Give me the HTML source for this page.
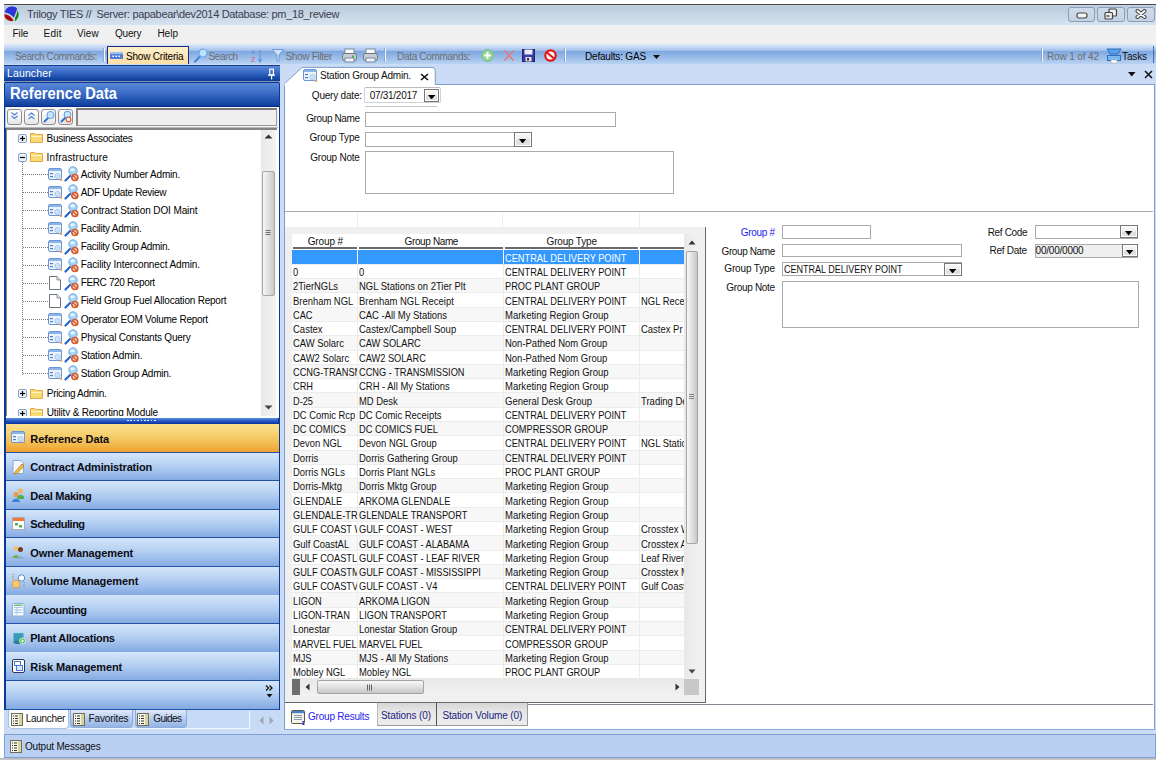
<!DOCTYPE html>
<html><head><meta charset="utf-8"><style>
html,body{margin:0;padding:0;}
body{width:1156px;height:760px;position:relative;overflow:hidden;background:#fff;font-family:"Liberation Sans",sans-serif;}
div,svg{position:absolute;box-sizing:border-box;}
</style></head><body>
<div style="left:4px;top:4px;width:1152px;height:1px;background:#474747;"></div>
<div style="left:4px;top:5px;width:1152px;height:20px;background:linear-gradient(#c6d4e4 0%,#bccbdb 10%,#d6e3f1 100%);"></div>
<svg style="left:4.3px;top:6px;" width="15" height="16" viewBox="0 0 15 16">
<path d="M0.6 6.3 Q1.8 1.2 7.5 0.6 Q11.8 0.3 13.2 2.6 L10 11.8 Q6 7.2 0.6 6.3 Z" fill="#2f34d8"/>
<path d="M0.3 8.3 Q5.5 8.2 9.6 14.6 Q8.6 15.4 6.2 15 Q0.4 13.4 0.3 8.3 Z" fill="#a80808"/>
<path d="M13.6 4.2 Q15.3 7.5 14.2 11 Q13.2 13.8 11 15.4 L10.9 12.6 Q12.8 8.8 13.6 4.2 Z" fill="#0a8a14"/>
</svg>
<div style='left:27px;top:9px;font:normal 11px "Liberation Sans";line-height:11px;color:#3a4050;white-space:pre;letter-spacing:-0.33px;'>Trilogy TIES //  Server: papabear\dev2014 Database: pm_18_review</div>
<div style="left:1068px;top:6.6px;width:27px;height:15.2px;border:1px solid #8a9cb6;border-radius:3px;background:linear-gradient(#d0dceb,#c4d2e4);"></div>
<div style="left:1097.4px;top:6.6px;width:27.2px;height:15.2px;border:1px solid #8a9cb6;border-radius:3px;background:linear-gradient(#d0dceb,#c4d2e4);"></div>
<div style="left:1127.2px;top:6.6px;width:27.5px;height:15.2px;border:1px solid #8a9cb6;border-radius:3px;background:linear-gradient(#d0dceb,#c4d2e4);"></div>
<svg style="left:1076px;top:12px;" width="12" height="7" viewBox="0 0 12 7"><rect x="1" y="1" width="10" height="5" rx="2" fill="#f4f4f4" stroke="#454545" stroke-width="1.2"/></svg>
<svg style="left:1104px;top:8px;" width="14" height="12" viewBox="0 0 14 12"><rect x="5" y="1" width="7.5" height="7" rx="1" fill="#eeeeee" stroke="#454545" stroke-width="1.2"/><rect x="1" y="4.5" width="7.5" height="6.5" rx="1" fill="#eeeeee" stroke="#454545" stroke-width="1.2"/><rect x="2.5" y="7" width="3" height="2" fill="#777"/></svg>
<svg style="left:1135px;top:9px;" width="12" height="10" viewBox="0 0 12 10"><path d="M2.5 2 L9.5 8 M9.5 2 L2.5 8" stroke="#454545" stroke-width="4" stroke-linecap="round"/><path d="M2.5 2 L9.5 8 M9.5 2 L2.5 8" stroke="#f6f6f6" stroke-width="2" stroke-linecap="round"/></svg>
<div style="left:4px;top:25px;width:1152px;height:19px;background:#f0f0f0;"></div>
<div style='left:12.5px;top:29px;font:normal 10px "Liberation Sans";line-height:10px;color:#111;white-space:pre;letter-spacing:-0.09px;'>File</div>
<div style='left:43.4px;top:29px;font:normal 10px "Liberation Sans";line-height:10px;color:#111;white-space:pre;letter-spacing:0.33px;'>Edit</div>
<div style='left:77px;top:29px;font:normal 10px "Liberation Sans";line-height:10px;color:#111;white-space:pre;letter-spacing:0.06px;'>View</div>
<div style='left:115px;top:29px;font:normal 10px "Liberation Sans";line-height:10px;color:#111;white-space:pre;letter-spacing:-0.19px;'>Query</div>
<div style='left:157.4px;top:29px;font:normal 10px "Liberation Sans";line-height:10px;color:#111;white-space:pre;letter-spacing:0.01px;'>Help</div>
<div style="left:4px;top:44px;width:1152px;height:20px;background:linear-gradient(#e0ebfb 0%,#c8daf5 15%,#a6c1ea 32%,#7ea8e0 37%,#93b7e7 60%,#b9d3f2 100%);"></div>
<div style='left:15px;top:52px;font:normal 10px "Liberation Sans";line-height:10px;color:#6e6e6e;white-space:pre;letter-spacing:-0.41px;'>Search Commands:</div>
<div style="left:103px;top:48px;width:1px;height:14px;background:#8aa6d0;"></div>
<div style="left:104px;top:48px;width:1px;height:14px;background:#f4f8fd;"></div>
<div style="left:107px;top:46px;width:82px;height:19px;border:1px solid #1f2a7a;border-bottom:none;background:linear-gradient(#fff0cc,#fcdca4);"></div>
<svg style="left:110px;top:52px;" width="13" height="7" viewBox="0 0 13 7"><rect x="0" y="0" width="13" height="7" fill="#4f7fd8"/><rect x="0" y="0" width="13" height="2" fill="#9cc0f0"/><rect x="2.5" y="3.5" width="1.5" height="1.5" fill="#fff"/><rect x="5.5" y="3.5" width="1.5" height="1.5" fill="#fff"/><rect x="8.5" y="3.5" width="1.5" height="1.5" fill="#fff"/></svg>
<div style='left:126px;top:52px;font:normal 10px "Liberation Sans";line-height:10px;color:#000;white-space:pre;letter-spacing:-0.2px;'>Show Criteria</div>
<svg style="left:193px;top:48px;" width="15" height="15" viewBox="0 0 15 15"><path d="M2 13.5 L7 8.5" stroke="#4a86d8" stroke-width="2.2" stroke-linecap="round"/><circle cx="10" cy="5" r="4" fill="#bfe0fb" stroke="#6aa6e6" stroke-width="1.2"/></svg>
<div style='left:208.5px;top:52px;font:normal 10px "Liberation Sans";line-height:10px;color:#6e6e6e;white-space:pre;letter-spacing:-0.4px;'>Search</div>
<svg style="left:251px;top:48px;" width="12" height="15" viewBox="0 0 12 15"><text x="0" y="6" font-size="6" fill="#5a8ad8" font-family="Liberation Sans">A</text><text x="0" y="14" font-size="7" fill="#e0506a" font-family="Liberation Sans">Z</text><path d="M9 2 L9 13 M7 11 L9 14 L11 11" stroke="#5a9ae0" stroke-width="1.2" fill="none"/></svg>
<svg style="left:272px;top:49px;" width="12" height="13" viewBox="0 0 12 13"><path d="M0.5 0.5 L11.5 0.5 L7 6 L7 12 L5 12 L5 6 Z" fill="#cfe2f7" stroke="#6a9ad8"/></svg>
<div style='left:285.5px;top:52px;font:normal 10px "Liberation Sans";line-height:10px;color:#6e6e6e;white-space:pre;letter-spacing:-0.32px;'>Show Filter</div>
<svg style="left:342px;top:48px;" width="15" height="15" viewBox="0 0 15 15"><rect x="3" y="1" width="9" height="5" fill="#fff" stroke="#7a8aa0"/><rect x="0.5" y="5.5" width="14" height="7" rx="2" fill="#c8ccd4" stroke="#6a7280"/><rect x="3" y="10" width="9" height="4" fill="#eef2f8" stroke="#7a8aa0"/><rect x="10" y="7.5" width="2" height="2" fill="#20c020"/></svg>
<svg style="left:363px;top:48px;" width="15" height="15" viewBox="0 0 15 15"><rect x="3" y="1" width="9" height="5" fill="#fff" stroke="#7a8aa0"/><rect x="0.5" y="5.5" width="14" height="7" rx="2" fill="#c8ccd4" stroke="#6a7280"/><rect x="3" y="10" width="9" height="4" fill="#eef2f8" stroke="#7a8aa0"/></svg>
<div style="left:384px;top:48px;width:1px;height:14px;background:#8aa6d0;"></div>
<div style="left:385px;top:48px;width:1px;height:14px;background:#f4f8fd;"></div>
<div style='left:397px;top:52px;font:normal 10px "Liberation Sans";line-height:10px;color:#6e6e6e;white-space:pre;letter-spacing:-0.31px;'>Data Commands:</div>
<svg style="left:481px;top:49px;" width="13" height="13" viewBox="0 0 13 13"><circle cx="6.5" cy="6.5" r="6" fill="#8fcf9a" stroke="#7cbc88"/><path d="M6.5 3 V10 M3 6.5 H10" stroke="#fff" stroke-width="2"/></svg>
<svg style="left:503px;top:49px;" width="12" height="13" viewBox="0 0 12 13"><path d="M1.5 1.5 L10.5 11.5 M10.5 1.5 L1.5 11.5" stroke="#e87878" stroke-width="1.6"/></svg>
<svg style="left:522px;top:49px;" width="13" height="13" viewBox="0 0 13 13"><rect x="0.5" y="0.5" width="12" height="12" fill="#3a3aa0" stroke="#22226e"/><rect x="2.5" y="0.5" width="8" height="5" fill="#e8ecf8"/><rect x="3.5" y="8" width="6" height="4.5" fill="#e0e0e8"/><rect x="5" y="9" width="2" height="2.5" fill="#333"/></svg>
<svg style="left:544px;top:49px;" width="13" height="13" viewBox="0 0 13 13"><circle cx="6.5" cy="6.5" r="5.2" fill="#fff" stroke="#e01818" stroke-width="2.2"/><path d="M3 3.5 L10 9.5" stroke="#e01818" stroke-width="2.2"/></svg>
<div style="left:564px;top:48px;width:1px;height:14px;background:#8aa6d0;"></div>
<div style="left:565px;top:48px;width:1px;height:14px;background:#f4f8fd;"></div>
<div style='left:585px;top:52px;font:normal 10px "Liberation Sans";line-height:10px;color:#000;white-space:pre;letter-spacing:-0.19px;'>Defaults: GAS</div>
<svg style="left:653px;top:55px;" width="7" height="4" viewBox="0 0 7 4"><path d="M0 0 H7 L3.5 4 Z" fill="#111"/></svg>
<div style="left:1041px;top:48px;width:1px;height:14px;background:#8aa6d0;"></div>
<div style="left:1042px;top:48px;width:1px;height:14px;background:#f4f8fd;"></div>
<div style='left:1047px;top:52px;font:normal 10px "Liberation Sans";line-height:10px;color:#6e6e6e;white-space:pre;letter-spacing:-0.13px;'>Row 1 of 42</div>
<svg style="left:1106px;top:48px;" width="16" height="16" viewBox="0 0 16 16"><path d="M1 1 H15 L12 6 H4 Z" fill="#5aa0e8" stroke="#2f6fc0"/><rect x="1.5" y="7.5" width="13" height="5" fill="#7ab8f0" stroke="#2f6fc0"/><rect x="5" y="12" width="6" height="3" fill="#fff" stroke="#aaa" stroke-width="0.6"/></svg>
<div style='left:1122px;top:52px;font:normal 10px "Liberation Sans";line-height:10px;color:#111;white-space:pre;letter-spacing:-0.12px;'>Tasks</div>
<div style="left:1152.5px;top:46px;width:1.2px;height:17px;background:#4a6aa8;"></div>
<div style="left:4px;top:64px;width:1152px;height:670px;background:#cadcf6;"></div>
<div style="left:4px;top:65px;width:275.5px;height:645px;background:#0b3a96;"></div>
<div style="left:4px;top:65px;width:275.5px;height:16.5px;background:linear-gradient(#5d8ad8 0%,#3a6cc6 40%,#1f52b0 70%,#0b3894 100%);border-top:1px solid #123a8e;border-bottom:1px solid #07308a;"></div>
<div style='left:7px;top:68px;font:normal 10.5px "Liberation Sans";line-height:10.5px;color:#fff;white-space:pre;letter-spacing:0.12px;'>Launcher</div>
<svg style="left:267px;top:68px;" width="9" height="12" viewBox="0 0 9 12"><rect x="2.8" y="1.2" width="3.6" height="5.6" fill="none" stroke="#fff" stroke-width="1.2"/><path d="M1 7.2 H8 M4.6 7.2 V11.5" stroke="#fff" stroke-width="1.2"/></svg>
<div style="left:4px;top:81px;width:276px;height:1.5px;background:#8898b0;"></div>
<div style="left:5px;top:82px;width:274px;height:24.5px;background:linear-gradient(#5b8ad8 0%,#3e6fc8 40%,#2558b4 70%,#0f3e9c 100%);border-top:1px solid #0c3590;border-bottom:1.5px solid #062c86;"></div>
<div style='left:9.8px;top:86px;font:bold 15.8px "Liberation Sans";line-height:15.8px;color:#fff;white-space:pre;transform:scaleX(0.9302);transform-origin:0 0;'>Reference Data</div>
<div style="left:6px;top:106.5px;width:272.5px;height:311px;background:#fbfbfb;"></div>
<div style="left:4.5px;top:106.5px;width:273.5px;height:21.5px;background:#f4f4f4;border-bottom:1px solid #b8b8b8;border-left:1px solid #b0c4e6;"></div>
<div style="left:7px;top:108.8px;width:15px;height:16px;border:1px solid #8e8e8e;border-radius:3px;background:linear-gradient(#ffffff,#e6e6e6);"></div>
<div style="left:24px;top:108.8px;width:15px;height:16px;border:1px solid #8e8e8e;border-radius:3px;background:linear-gradient(#ffffff,#e6e6e6);"></div>
<div style="left:41px;top:108.8px;width:15px;height:16px;border:1px solid #8e8e8e;border-radius:3px;background:linear-gradient(#ffffff,#e6e6e6);"></div>
<div style="left:58px;top:108.8px;width:15px;height:16px;border:1px solid #8e8e8e;border-radius:3px;background:linear-gradient(#ffffff,#e6e6e6);"></div>
<svg style="left:10px;top:111px;" width="9" height="10" viewBox="0 0 9 10"><path d="M1.5 1.5 L4.5 4 L7.5 1.5 M1.5 5 L4.5 7.5 L7.5 5" stroke="#4f80d4" stroke-width="1.1" fill="none"/></svg>
<svg style="left:27px;top:111px;" width="9" height="10" viewBox="0 0 9 10"><path d="M1.5 4.5 L4.5 2 L7.5 4.5 M1.5 8 L4.5 5.5 L7.5 8" stroke="#4f80d4" stroke-width="1.1" fill="none"/></svg>
<svg style="left:43px;top:110px;" width="12" height="13" viewBox="0 0 12 13"><path d="M1.5 11.5 L5 8" stroke="#2a72d8" stroke-width="2" stroke-linecap="round"/><circle cx="7.5" cy="5" r="3.6" fill="#c6e4fb" stroke="#5a9ae0" stroke-width="1"/></svg>
<svg style="left:60px;top:110px;" width="12" height="13" viewBox="0 0 12 13"><path d="M1.5 11.5 L5 8" stroke="#2a72d8" stroke-width="2" stroke-linecap="round"/><circle cx="7.5" cy="4.5" r="3.4" fill="#c6e4fb" stroke="#5a9ae0" stroke-width="1"/><circle cx="8.5" cy="9.5" r="2.3" fill="#fff" stroke="#e0602a" stroke-width="1.2"/></svg>
<div style="left:76px;top:108px;width:200.5px;height:18px;border:1px solid #9a9a9a;border-top:2px solid #7a7a7a;border-left:2px solid #8a8a8a;background:#efefef;"></div>
<div style="left:6px;top:128px;width:270.5px;height:287.5px;background:#fff;border-top:2px solid #858585;border-left:1.5px solid #8a8a8a;"></div>
<div style="left:261px;top:130px;width:14.5px;height:285.5px;background:linear-gradient(90deg,#e9e9e9,#f3f3f3);"></div>
<svg style="left:263.5px;top:134px;" width="9" height="5" viewBox="0 0 9 5"><path d="M0.5 4.5 L4.5 0.5 L8.5 4.5 Z" fill="#333"/></svg>
<svg style="left:263.5px;top:405px;" width="9" height="5" viewBox="0 0 9 5"><path d="M0.5 0.5 L4.5 4.5 L8.5 0.5 Z" fill="#444"/></svg>
<div style="left:262px;top:171px;width:12.5px;height:124.5px;border:1px solid #a8a8a8;border-radius:2px;background:linear-gradient(90deg,#f6f6f6,#dcdcdc 60%,#c9c9c9);"></div>
<svg style="left:264px;top:230px;" width="8" height="6" viewBox="0 0 8 6"><path d="M1.5 0.5 H6.5 M1.5 2.5 H6.5 M1.5 4.5 H6.5" stroke="#707070" stroke-width="1"/></svg>
<svg style="left:18.3px;top:134px;" width="9" height="9" viewBox="0 0 9 9"><rect x="0.5" y="0.5" width="8" height="8" rx="1.5" fill="#eef2f7" stroke="#86a3c8"/><path d="M2 4.5 H7" stroke="#000" stroke-width="1.2"/><path d="M4.5 2 V7" stroke="#000" stroke-width="1.2"/></svg>
<svg style="left:30px;top:132px;" width="13" height="11" viewBox="0 0 13 11"><path d="M0.5 1.5 H5 L6 2.5 H12.5 V10.5 H0.5 Z" fill="#f7dc73" stroke="#e4a450"/><path d="M1 4.5 H12" stroke="#fff4c0" stroke-width="1"/></svg>
<div style='left:46.6px;top:134px;font:normal 10px "Liberation Sans";line-height:10px;color:#000;white-space:pre;letter-spacing:-0.28px;'>Business Associates</div>
<svg style="left:18.3px;top:153px;" width="9" height="9" viewBox="0 0 9 9"><rect x="0.5" y="0.5" width="8" height="8" rx="1.5" fill="#eef2f7" stroke="#86a3c8"/><path d="M2 4.5 H7" stroke="#000" stroke-width="1.2"/></svg>
<svg style="left:30px;top:151px;" width="13" height="11" viewBox="0 0 13 11"><path d="M0.5 1.5 H5 L6 2.5 H12.5 V10.5 H0.5 Z" fill="#f7dc73" stroke="#e4a450"/><path d="M1 4.5 H12" stroke="#fff4c0" stroke-width="1"/></svg>
<div style='left:46.6px;top:153px;font:normal 10px "Liberation Sans";line-height:10px;color:#000;white-space:pre;letter-spacing:0.17px;'>Infrastructure</div>
<div style="left:22px;top:162px;width:1px;height:212.5px;background:repeating-linear-gradient(#7a7a7a 0 1px,transparent 1px 2px);"></div>
<div style="left:23px;top:174px;width:25px;height:1px;background:repeating-linear-gradient(90deg,#7a7a7a 0 1px,transparent 1px 2px);"></div>
<svg style="left:47.8px;top:167.7px;" width="15" height="13" viewBox="0 0 15 13"><rect x="0.5" y="0.5" width="13" height="11" rx="1.5" fill="#eef3f9" stroke="#6a96d8"/><rect x="1" y="1" width="12" height="2" fill="#8ab4ea"/><rect x="2" y="5" width="3" height="1.2" fill="#4a7ed0"/><rect x="2" y="8" width="3" height="1.2" fill="#4a7ed0"/><circle cx="9.5" cy="8" r="2.6" fill="#cfe2f7" stroke="#9ac0ea" stroke-width="0.8"/><circle cx="13" cy="11.8" r="1.2" fill="#e0a060"/></svg>
<svg style="left:63.5px;top:166.2px;" width="15" height="16" viewBox="0 0 15 16"><path d="M1.5 14.5 L6 10" stroke="#1f66d0" stroke-width="2.2" stroke-linecap="round"/><circle cx="9" cy="5" r="4.2" fill="#9fd4f6" stroke="#7aa8e0" stroke-width="1"/><ellipse cx="8.6" cy="3.8" rx="2.4" ry="1.6" fill="#e6f6ff"/><circle cx="10.8" cy="11.5" r="3" fill="#f4e0d8" stroke="#d8582a" stroke-width="1.7"/><path d="M8.8 9.6 L12.8 13.4" stroke="#d8582a" stroke-width="1.4"/></svg>
<div style='left:80.7px;top:170px;font:normal 10px "Liberation Sans";line-height:10px;color:#000;white-space:pre;letter-spacing:-0.18px;'>Activity Number Admin.</div>
<div style="left:23px;top:192px;width:25px;height:1px;background:repeating-linear-gradient(90deg,#7a7a7a 0 1px,transparent 1px 2px);"></div>
<svg style="left:47.8px;top:185.8px;" width="15" height="13" viewBox="0 0 15 13"><rect x="0.5" y="0.5" width="13" height="11" rx="1.5" fill="#eef3f9" stroke="#6a96d8"/><rect x="1" y="1" width="12" height="2" fill="#8ab4ea"/><rect x="2" y="5" width="3" height="1.2" fill="#4a7ed0"/><rect x="2" y="8" width="3" height="1.2" fill="#4a7ed0"/><circle cx="9.5" cy="8" r="2.6" fill="#cfe2f7" stroke="#9ac0ea" stroke-width="0.8"/><circle cx="13" cy="11.8" r="1.2" fill="#e0a060"/></svg>
<svg style="left:63.5px;top:184.3px;" width="15" height="16" viewBox="0 0 15 16"><path d="M1.5 14.5 L6 10" stroke="#1f66d0" stroke-width="2.2" stroke-linecap="round"/><circle cx="9" cy="5" r="4.2" fill="#9fd4f6" stroke="#7aa8e0" stroke-width="1"/><ellipse cx="8.6" cy="3.8" rx="2.4" ry="1.6" fill="#e6f6ff"/><circle cx="10.8" cy="11.5" r="3" fill="#f4e0d8" stroke="#d8582a" stroke-width="1.7"/><path d="M8.8 9.6 L12.8 13.4" stroke="#d8582a" stroke-width="1.4"/></svg>
<div style='left:80.7px;top:188px;font:normal 10px "Liberation Sans";line-height:10px;color:#000;white-space:pre;letter-spacing:-0.3px;'>ADF Update Review</div>
<div style="left:23px;top:210px;width:25px;height:1px;background:repeating-linear-gradient(90deg,#7a7a7a 0 1px,transparent 1px 2px);"></div>
<svg style="left:47.8px;top:203.9px;" width="15" height="13" viewBox="0 0 15 13"><rect x="0.5" y="0.5" width="13" height="11" rx="1.5" fill="#eef3f9" stroke="#6a96d8"/><rect x="1" y="1" width="12" height="2" fill="#8ab4ea"/><rect x="2" y="5" width="3" height="1.2" fill="#4a7ed0"/><rect x="2" y="8" width="3" height="1.2" fill="#4a7ed0"/><circle cx="9.5" cy="8" r="2.6" fill="#cfe2f7" stroke="#9ac0ea" stroke-width="0.8"/><circle cx="13" cy="11.8" r="1.2" fill="#e0a060"/></svg>
<svg style="left:63.5px;top:202.4px;" width="15" height="16" viewBox="0 0 15 16"><path d="M1.5 14.5 L6 10" stroke="#1f66d0" stroke-width="2.2" stroke-linecap="round"/><circle cx="9" cy="5" r="4.2" fill="#9fd4f6" stroke="#7aa8e0" stroke-width="1"/><ellipse cx="8.6" cy="3.8" rx="2.4" ry="1.6" fill="#e6f6ff"/><circle cx="10.8" cy="11.5" r="3" fill="#f4e0d8" stroke="#d8582a" stroke-width="1.7"/><path d="M8.8 9.6 L12.8 13.4" stroke="#d8582a" stroke-width="1.4"/></svg>
<div style='left:80.7px;top:206px;font:normal 10px "Liberation Sans";line-height:10px;color:#000;white-space:pre;letter-spacing:-0.11px;'>Contract Station DOI Maint</div>
<div style="left:23px;top:228px;width:25px;height:1px;background:repeating-linear-gradient(90deg,#7a7a7a 0 1px,transparent 1px 2px);"></div>
<svg style="left:47.8px;top:222px;" width="15" height="13" viewBox="0 0 15 13"><rect x="0.5" y="0.5" width="13" height="11" rx="1.5" fill="#eef3f9" stroke="#6a96d8"/><rect x="1" y="1" width="12" height="2" fill="#8ab4ea"/><rect x="2" y="5" width="3" height="1.2" fill="#4a7ed0"/><rect x="2" y="8" width="3" height="1.2" fill="#4a7ed0"/><circle cx="9.5" cy="8" r="2.6" fill="#cfe2f7" stroke="#9ac0ea" stroke-width="0.8"/><circle cx="13" cy="11.8" r="1.2" fill="#e0a060"/></svg>
<svg style="left:63.5px;top:220.5px;" width="15" height="16" viewBox="0 0 15 16"><path d="M1.5 14.5 L6 10" stroke="#1f66d0" stroke-width="2.2" stroke-linecap="round"/><circle cx="9" cy="5" r="4.2" fill="#9fd4f6" stroke="#7aa8e0" stroke-width="1"/><ellipse cx="8.6" cy="3.8" rx="2.4" ry="1.6" fill="#e6f6ff"/><circle cx="10.8" cy="11.5" r="3" fill="#f4e0d8" stroke="#d8582a" stroke-width="1.7"/><path d="M8.8 9.6 L12.8 13.4" stroke="#d8582a" stroke-width="1.4"/></svg>
<div style='left:80.7px;top:224px;font:normal 10px "Liberation Sans";line-height:10px;color:#000;white-space:pre;letter-spacing:-0.24px;'>Facility Admin.</div>
<div style="left:23px;top:247px;width:25px;height:1px;background:repeating-linear-gradient(90deg,#7a7a7a 0 1px,transparent 1px 2px);"></div>
<svg style="left:47.8px;top:240.1px;" width="15" height="13" viewBox="0 0 15 13"><rect x="0.5" y="0.5" width="13" height="11" rx="1.5" fill="#eef3f9" stroke="#6a96d8"/><rect x="1" y="1" width="12" height="2" fill="#8ab4ea"/><rect x="2" y="5" width="3" height="1.2" fill="#4a7ed0"/><rect x="2" y="8" width="3" height="1.2" fill="#4a7ed0"/><circle cx="9.5" cy="8" r="2.6" fill="#cfe2f7" stroke="#9ac0ea" stroke-width="0.8"/><circle cx="13" cy="11.8" r="1.2" fill="#e0a060"/></svg>
<svg style="left:63.5px;top:238.6px;" width="15" height="16" viewBox="0 0 15 16"><path d="M1.5 14.5 L6 10" stroke="#1f66d0" stroke-width="2.2" stroke-linecap="round"/><circle cx="9" cy="5" r="4.2" fill="#9fd4f6" stroke="#7aa8e0" stroke-width="1"/><ellipse cx="8.6" cy="3.8" rx="2.4" ry="1.6" fill="#e6f6ff"/><circle cx="10.8" cy="11.5" r="3" fill="#f4e0d8" stroke="#d8582a" stroke-width="1.7"/><path d="M8.8 9.6 L12.8 13.4" stroke="#d8582a" stroke-width="1.4"/></svg>
<div style='left:80.7px;top:242px;font:normal 10px "Liberation Sans";line-height:10px;color:#000;white-space:pre;letter-spacing:-0.28px;'>Facility Group Admin.</div>
<div style="left:23px;top:265px;width:25px;height:1px;background:repeating-linear-gradient(90deg,#7a7a7a 0 1px,transparent 1px 2px);"></div>
<svg style="left:47.8px;top:258.2px;" width="15" height="13" viewBox="0 0 15 13"><rect x="0.5" y="0.5" width="13" height="11" rx="1.5" fill="#eef3f9" stroke="#6a96d8"/><rect x="1" y="1" width="12" height="2" fill="#8ab4ea"/><rect x="2" y="5" width="3" height="1.2" fill="#4a7ed0"/><rect x="2" y="8" width="3" height="1.2" fill="#4a7ed0"/><circle cx="9.5" cy="8" r="2.6" fill="#cfe2f7" stroke="#9ac0ea" stroke-width="0.8"/><circle cx="13" cy="11.8" r="1.2" fill="#e0a060"/></svg>
<svg style="left:63.5px;top:256.7px;" width="15" height="16" viewBox="0 0 15 16"><path d="M1.5 14.5 L6 10" stroke="#1f66d0" stroke-width="2.2" stroke-linecap="round"/><circle cx="9" cy="5" r="4.2" fill="#9fd4f6" stroke="#7aa8e0" stroke-width="1"/><ellipse cx="8.6" cy="3.8" rx="2.4" ry="1.6" fill="#e6f6ff"/><circle cx="10.8" cy="11.5" r="3" fill="#f4e0d8" stroke="#d8582a" stroke-width="1.7"/><path d="M8.8 9.6 L12.8 13.4" stroke="#d8582a" stroke-width="1.4"/></svg>
<div style='left:80.7px;top:260px;font:normal 10px "Liberation Sans";line-height:10px;color:#000;white-space:pre;letter-spacing:-0.11px;'>Facility Interconnect Admin.</div>
<div style="left:23px;top:283px;width:25px;height:1px;background:repeating-linear-gradient(90deg,#7a7a7a 0 1px,transparent 1px 2px);"></div>
<svg style="left:49.3px;top:275.8px;" width="12" height="14" viewBox="0 0 12 14"><path d="M0.5 0.5 H8 L11.5 4 V13.5 H0.5 Z" fill="#fff" stroke="#6e7680"/><path d="M8 0.5 V4 H11.5" fill="#e8e8e8" stroke="#6e7680" stroke-width="0.8"/></svg>
<svg style="left:63.5px;top:274.8px;" width="15" height="16" viewBox="0 0 15 16"><path d="M1.5 14.5 L6 10" stroke="#1f66d0" stroke-width="2.2" stroke-linecap="round"/><circle cx="9" cy="5" r="4.2" fill="#9fd4f6" stroke="#7aa8e0" stroke-width="1"/><ellipse cx="8.6" cy="3.8" rx="2.4" ry="1.6" fill="#e6f6ff"/><circle cx="10.8" cy="11.5" r="3" fill="#f4e0d8" stroke="#d8582a" stroke-width="1.7"/><path d="M8.8 9.6 L12.8 13.4" stroke="#d8582a" stroke-width="1.4"/></svg>
<div style='left:80.7px;top:278px;font:normal 10px "Liberation Sans";line-height:10px;color:#000;white-space:pre;letter-spacing:-0.36px;'>FERC 720 Report</div>
<div style="left:23px;top:301px;width:25px;height:1px;background:repeating-linear-gradient(90deg,#7a7a7a 0 1px,transparent 1px 2px);"></div>
<svg style="left:49.3px;top:293.9px;" width="12" height="14" viewBox="0 0 12 14"><path d="M0.5 0.5 H8 L11.5 4 V13.5 H0.5 Z" fill="#fff" stroke="#6e7680"/><path d="M8 0.5 V4 H11.5" fill="#e8e8e8" stroke="#6e7680" stroke-width="0.8"/></svg>
<svg style="left:63.5px;top:292.9px;" width="15" height="16" viewBox="0 0 15 16"><path d="M1.5 14.5 L6 10" stroke="#1f66d0" stroke-width="2.2" stroke-linecap="round"/><circle cx="9" cy="5" r="4.2" fill="#9fd4f6" stroke="#7aa8e0" stroke-width="1"/><ellipse cx="8.6" cy="3.8" rx="2.4" ry="1.6" fill="#e6f6ff"/><circle cx="10.8" cy="11.5" r="3" fill="#f4e0d8" stroke="#d8582a" stroke-width="1.7"/><path d="M8.8 9.6 L12.8 13.4" stroke="#d8582a" stroke-width="1.4"/></svg>
<div style='left:80.7px;top:296px;font:normal 10px "Liberation Sans";line-height:10px;color:#000;white-space:pre;letter-spacing:-0.21px;'>Field Group Fuel Allocation Report</div>
<div style="left:23px;top:319px;width:25px;height:1px;background:repeating-linear-gradient(90deg,#7a7a7a 0 1px,transparent 1px 2px);"></div>
<svg style="left:47.8px;top:312.5px;" width="15" height="13" viewBox="0 0 15 13"><rect x="0.5" y="0.5" width="13" height="11" rx="1.5" fill="#eef3f9" stroke="#6a96d8"/><rect x="1" y="1" width="12" height="2" fill="#8ab4ea"/><rect x="2" y="5" width="3" height="1.2" fill="#4a7ed0"/><rect x="2" y="8" width="3" height="1.2" fill="#4a7ed0"/><circle cx="9.5" cy="8" r="2.6" fill="#cfe2f7" stroke="#9ac0ea" stroke-width="0.8"/><circle cx="13" cy="11.8" r="1.2" fill="#e0a060"/></svg>
<svg style="left:63.5px;top:311px;" width="15" height="16" viewBox="0 0 15 16"><path d="M1.5 14.5 L6 10" stroke="#1f66d0" stroke-width="2.2" stroke-linecap="round"/><circle cx="9" cy="5" r="4.2" fill="#9fd4f6" stroke="#7aa8e0" stroke-width="1"/><ellipse cx="8.6" cy="3.8" rx="2.4" ry="1.6" fill="#e6f6ff"/><circle cx="10.8" cy="11.5" r="3" fill="#f4e0d8" stroke="#d8582a" stroke-width="1.7"/><path d="M8.8 9.6 L12.8 13.4" stroke="#d8582a" stroke-width="1.4"/></svg>
<div style='left:80.7px;top:315px;font:normal 10px "Liberation Sans";line-height:10px;color:#000;white-space:pre;letter-spacing:-0.26px;'>Operator EOM Volume Report</div>
<div style="left:23px;top:337px;width:25px;height:1px;background:repeating-linear-gradient(90deg,#7a7a7a 0 1px,transparent 1px 2px);"></div>
<svg style="left:47.8px;top:330.6px;" width="15" height="13" viewBox="0 0 15 13"><rect x="0.5" y="0.5" width="13" height="11" rx="1.5" fill="#eef3f9" stroke="#6a96d8"/><rect x="1" y="1" width="12" height="2" fill="#8ab4ea"/><rect x="2" y="5" width="3" height="1.2" fill="#4a7ed0"/><rect x="2" y="8" width="3" height="1.2" fill="#4a7ed0"/><circle cx="9.5" cy="8" r="2.6" fill="#cfe2f7" stroke="#9ac0ea" stroke-width="0.8"/><circle cx="13" cy="11.8" r="1.2" fill="#e0a060"/></svg>
<svg style="left:63.5px;top:329.1px;" width="15" height="16" viewBox="0 0 15 16"><path d="M1.5 14.5 L6 10" stroke="#1f66d0" stroke-width="2.2" stroke-linecap="round"/><circle cx="9" cy="5" r="4.2" fill="#9fd4f6" stroke="#7aa8e0" stroke-width="1"/><ellipse cx="8.6" cy="3.8" rx="2.4" ry="1.6" fill="#e6f6ff"/><circle cx="10.8" cy="11.5" r="3" fill="#f4e0d8" stroke="#d8582a" stroke-width="1.7"/><path d="M8.8 9.6 L12.8 13.4" stroke="#d8582a" stroke-width="1.4"/></svg>
<div style='left:80.7px;top:333px;font:normal 10px "Liberation Sans";line-height:10px;color:#000;white-space:pre;letter-spacing:-0.22px;'>Physical Constants Query</div>
<div style="left:23px;top:355px;width:25px;height:1px;background:repeating-linear-gradient(90deg,#7a7a7a 0 1px,transparent 1px 2px);"></div>
<svg style="left:47.8px;top:348.7px;" width="15" height="13" viewBox="0 0 15 13"><rect x="0.5" y="0.5" width="13" height="11" rx="1.5" fill="#eef3f9" stroke="#6a96d8"/><rect x="1" y="1" width="12" height="2" fill="#8ab4ea"/><rect x="2" y="5" width="3" height="1.2" fill="#4a7ed0"/><rect x="2" y="8" width="3" height="1.2" fill="#4a7ed0"/><circle cx="9.5" cy="8" r="2.6" fill="#cfe2f7" stroke="#9ac0ea" stroke-width="0.8"/><circle cx="13" cy="11.8" r="1.2" fill="#e0a060"/></svg>
<svg style="left:63.5px;top:347.2px;" width="15" height="16" viewBox="0 0 15 16"><path d="M1.5 14.5 L6 10" stroke="#1f66d0" stroke-width="2.2" stroke-linecap="round"/><circle cx="9" cy="5" r="4.2" fill="#9fd4f6" stroke="#7aa8e0" stroke-width="1"/><ellipse cx="8.6" cy="3.8" rx="2.4" ry="1.6" fill="#e6f6ff"/><circle cx="10.8" cy="11.5" r="3" fill="#f4e0d8" stroke="#d8582a" stroke-width="1.7"/><path d="M8.8 9.6 L12.8 13.4" stroke="#d8582a" stroke-width="1.4"/></svg>
<div style='left:80.7px;top:351px;font:normal 10px "Liberation Sans";line-height:10px;color:#000;white-space:pre;letter-spacing:-0.21px;'>Station Admin.</div>
<div style="left:23px;top:373px;width:25px;height:1px;background:repeating-linear-gradient(90deg,#7a7a7a 0 1px,transparent 1px 2px);"></div>
<svg style="left:47.8px;top:366.8px;" width="15" height="13" viewBox="0 0 15 13"><rect x="0.5" y="0.5" width="13" height="11" rx="1.5" fill="#eef3f9" stroke="#6a96d8"/><rect x="1" y="1" width="12" height="2" fill="#8ab4ea"/><rect x="2" y="5" width="3" height="1.2" fill="#4a7ed0"/><rect x="2" y="8" width="3" height="1.2" fill="#4a7ed0"/><circle cx="9.5" cy="8" r="2.6" fill="#cfe2f7" stroke="#9ac0ea" stroke-width="0.8"/><circle cx="13" cy="11.8" r="1.2" fill="#e0a060"/></svg>
<svg style="left:63.5px;top:365.3px;" width="15" height="16" viewBox="0 0 15 16"><path d="M1.5 14.5 L6 10" stroke="#1f66d0" stroke-width="2.2" stroke-linecap="round"/><circle cx="9" cy="5" r="4.2" fill="#9fd4f6" stroke="#7aa8e0" stroke-width="1"/><ellipse cx="8.6" cy="3.8" rx="2.4" ry="1.6" fill="#e6f6ff"/><circle cx="10.8" cy="11.5" r="3" fill="#f4e0d8" stroke="#d8582a" stroke-width="1.7"/><path d="M8.8 9.6 L12.8 13.4" stroke="#d8582a" stroke-width="1.4"/></svg>
<div style='left:80.7px;top:369px;font:normal 10px "Liberation Sans";line-height:10px;color:#000;white-space:pre;letter-spacing:-0.23px;'>Station Group Admin.</div>
<svg style="left:18.3px;top:389.2px;" width="9" height="9" viewBox="0 0 9 9"><rect x="0.5" y="0.5" width="8" height="8" rx="1.5" fill="#eef2f7" stroke="#86a3c8"/><path d="M2 4.5 H7" stroke="#000" stroke-width="1.2"/><path d="M4.5 2 V7" stroke="#000" stroke-width="1.2"/></svg>
<svg style="left:30px;top:387.5px;" width="13" height="11" viewBox="0 0 13 11"><path d="M0.5 1.5 H5 L6 2.5 H12.5 V10.5 H0.5 Z" fill="#f7dc73" stroke="#e4a450"/><path d="M1 4.5 H12" stroke="#fff4c0" stroke-width="1"/></svg>
<div style='left:46.8px;top:389px;font:normal 10px "Liberation Sans";line-height:10px;color:#000;white-space:pre;letter-spacing:-0.31px;'>Pricing Admin.</div>
<div style="left:7px;top:400px;width:254px;height:15.5px;overflow:hidden;">
<svg style="left:11.3px;top:8.5px;" width="9" height="9" viewBox="0 0 9 9"><rect x="0.5" y="0.5" width="8" height="8" rx="1.5" fill="#eef2f7" stroke="#86a3c8"/><path d="M2 4.5 H7" stroke="#000" stroke-width="1.2"/><path d="M4.5 2 V7" stroke="#000" stroke-width="1.2"/></svg>
<svg style="left:23px;top:7px;" width="13" height="11" viewBox="0 0 13 11"><path d="M0.5 1.5 H5 L6 2.5 H12.5 V10.5 H0.5 Z" fill="#f7dc73" stroke="#e4a450"/><path d="M1 4.5 H12" stroke="#fff4c0" stroke-width="1"/></svg>
<div style='left:39.8px;top:8px;font:normal 10px "Liberation Sans";line-height:10px;color:#000;white-space:pre;letter-spacing:-0.17px;'>Utility &amp; Reporting Module</div>
</div>
<div style="left:6px;top:415.5px;width:255px;height:2px;background:#fff;"></div>
<div style="left:6px;top:417.5px;width:272px;height:6.5px;background:linear-gradient(#5a8ee0,#2458c0 50%,#0830a0);"></div>
<div style="left:127px;top:419.5px;width:1.5px;height:1.5px;background:#e8f0ff;"></div>
<div style="left:130.4px;top:419.5px;width:1.5px;height:1.5px;background:#e8f0ff;"></div>
<div style="left:133.8px;top:419.5px;width:1.5px;height:1.5px;background:#e8f0ff;"></div>
<div style="left:137.2px;top:419.5px;width:1.5px;height:1.5px;background:#e8f0ff;"></div>
<div style="left:140.6px;top:419.5px;width:1.5px;height:1.5px;background:#e8f0ff;"></div>
<div style="left:144px;top:419.5px;width:1.5px;height:1.5px;background:#e8f0ff;"></div>
<div style="left:147.4px;top:419.5px;width:1.5px;height:1.5px;background:#e8f0ff;"></div>
<div style="left:150.8px;top:419.5px;width:1.5px;height:1.5px;background:#e8f0ff;"></div>
<div style="left:154.2px;top:419.5px;width:1.5px;height:1.5px;background:#e8f0ff;"></div>
<div style="left:6px;top:424px;width:272.5px;height:28.55px;background:linear-gradient(#fbe08e 0%,#f6cf6c 40%,#f2b548 75%,#ee9e2c 100%);"></div>
<div style="left:6px;top:451.75px;width:272.5px;height:1.3px;background:#2352a8;"></div>
<div style='left:30.3px;top:434px;font:bold 11px "Liberation Sans";line-height:11px;color:#0c0c14;white-space:pre;letter-spacing:-0.1px;'>Reference Data</div>
<div style="left:6px;top:452.55px;width:272.5px;height:28.55px;background:linear-gradient(#d4e5fa 0%,#bcd5f3 35%,#a3c2ed 65%,#82a9e1 100%);"></div>
<div style="left:6px;top:480.3px;width:272.5px;height:1.3px;background:#2352a8;"></div>
<div style='left:30.3px;top:462px;font:bold 11px "Liberation Sans";line-height:11px;color:#0c0c14;white-space:pre;letter-spacing:-0.16px;'>Contract Administration</div>
<div style="left:6px;top:481.1px;width:272.5px;height:28.55px;background:linear-gradient(#d4e5fa 0%,#bcd5f3 35%,#a3c2ed 65%,#82a9e1 100%);"></div>
<div style="left:6px;top:508.85px;width:272.5px;height:1.3px;background:#2352a8;"></div>
<div style='left:30.3px;top:491px;font:bold 11px "Liberation Sans";line-height:11px;color:#0c0c14;white-space:pre;letter-spacing:-0.27px;'>Deal Making</div>
<div style="left:6px;top:509.65px;width:272.5px;height:28.55px;background:linear-gradient(#d4e5fa 0%,#bcd5f3 35%,#a3c2ed 65%,#82a9e1 100%);"></div>
<div style="left:6px;top:537.4px;width:272.5px;height:1.3px;background:#2352a8;"></div>
<div style='left:30.3px;top:519px;font:bold 11px "Liberation Sans";line-height:11px;color:#0c0c14;white-space:pre;letter-spacing:-0.5px;'>Scheduling</div>
<div style="left:6px;top:538.2px;width:272.5px;height:28.55px;background:linear-gradient(#d4e5fa 0%,#bcd5f3 35%,#a3c2ed 65%,#82a9e1 100%);"></div>
<div style="left:6px;top:565.95px;width:272.5px;height:1.3px;background:#2352a8;"></div>
<div style='left:30.3px;top:548px;font:bold 11px "Liberation Sans";line-height:11px;color:#0c0c14;white-space:pre;letter-spacing:-0.11px;'>Owner Management</div>
<div style="left:6px;top:566.75px;width:272.5px;height:28.55px;background:linear-gradient(#d4e5fa 0%,#bcd5f3 35%,#a3c2ed 65%,#82a9e1 100%);"></div>
<div style="left:6px;top:594.5px;width:272.5px;height:1.3px;background:#2352a8;"></div>
<div style='left:30.3px;top:576px;font:bold 11px "Liberation Sans";line-height:11px;color:#0c0c14;white-space:pre;letter-spacing:-0.07px;'>Volume Management</div>
<div style="left:6px;top:595.3px;width:272.5px;height:28.55px;background:linear-gradient(#d4e5fa 0%,#bcd5f3 35%,#a3c2ed 65%,#82a9e1 100%);"></div>
<div style="left:6px;top:623.05px;width:272.5px;height:1.3px;background:#2352a8;"></div>
<div style='left:30.3px;top:605px;font:bold 11px "Liberation Sans";line-height:11px;color:#0c0c14;white-space:pre;letter-spacing:-0.42px;'>Accounting</div>
<div style="left:6px;top:623.85px;width:272.5px;height:28.55px;background:linear-gradient(#d4e5fa 0%,#bcd5f3 35%,#a3c2ed 65%,#82a9e1 100%);"></div>
<div style="left:6px;top:651.6px;width:272.5px;height:1.3px;background:#2352a8;"></div>
<div style='left:30.3px;top:633px;font:bold 11px "Liberation Sans";line-height:11px;color:#0c0c14;white-space:pre;letter-spacing:-0.26px;'>Plant Allocations</div>
<div style="left:6px;top:652.4px;width:272.5px;height:28.55px;background:linear-gradient(#d4e5fa 0%,#bcd5f3 35%,#a3c2ed 65%,#82a9e1 100%);"></div>
<div style="left:6px;top:680.15px;width:272.5px;height:1.3px;background:#2352a8;"></div>
<div style='left:30.3px;top:662px;font:bold 11px "Liberation Sans";line-height:11px;color:#0c0c14;white-space:pre;letter-spacing:-0.11px;'>Risk Management</div>
<svg style="left:11px;top:431px;" width="15" height="13" viewBox="0 0 15 13"><rect x="0.5" y="0.5" width="13" height="11" rx="1.5" fill="#eef3f9" stroke="#6a96d8"/><rect x="1" y="1" width="12" height="2" fill="#8ab4ea"/><rect x="2" y="5" width="3" height="1.2" fill="#4a7ed0"/><rect x="2" y="8" width="3" height="1.2" fill="#4a7ed0"/><circle cx="9.5" cy="8" r="2.6" fill="#cfe2f7" stroke="#9ac0ea" stroke-width="0.8"/><circle cx="13" cy="11.8" r="1.2" fill="#e0a060"/></svg>
<svg style="left:11px;top:458.6px;" width="15" height="16" viewBox="0 0 15 16"><path d="M2 1.5 H10 L12.5 4 V14.5 H2 Z" fill="#f2f6fc" stroke="#8aa8d0"/><path d="M4 13 L11 5 L13 7 L6 14.5 L3.5 15 Z" fill="#f0c040" stroke="#c08020" stroke-width="0.8"/></svg>
<svg style="left:11px;top:487.1px;" width="15" height="16" viewBox="0 0 15 16"><circle cx="9.5" cy="4" r="2.6" fill="#f0b860"/><path d="M6 9.5 Q9.5 6 13 9.5 V12 H6 Z" fill="#50b050"/><circle cx="5" cy="7.5" r="2.6" fill="#e89858"/><path d="M1 14 Q5 9.5 9 14 V15 H1 Z" fill="#3a80d8"/></svg>
<svg style="left:11.5px;top:516.65px;" width="14" height="14" viewBox="0 0 14 14"><rect x="0.5" y="0.5" width="12" height="12" fill="#fff" stroke="#aab"/><rect x="1" y="1" width="11" height="3" fill="#f07a30"/><rect x="3" y="6" width="3" height="2.5" fill="#50b050"/><rect x="7" y="8" width="3" height="2.5" fill="#50b050"/></svg>
<svg style="left:11px;top:544.2px;" width="15" height="16" viewBox="0 0 15 16"><circle cx="5" cy="4.5" r="2.5" fill="#f0c070"/><path d="M1 14 Q5 8 9 14 Z" fill="#6ab04a"/><circle cx="9.5" cy="5.5" r="2.5" fill="#704020"/><path d="M5.5 15 Q9.5 9 13.5 15 Z" fill="#8ab0d8"/></svg>
<svg style="left:11px;top:572.75px;" width="15" height="16" viewBox="0 0 15 16"><circle cx="5" cy="11" r="4" fill="#f2c878" stroke="#d09840" stroke-width="0.8"/><circle cx="10.5" cy="5" r="3.2" fill="#fff" stroke="#4a8ad8" stroke-width="1"/><path d="M2 1 V6 M13 9 V15" stroke="#777" stroke-dasharray="1 1"/></svg>
<svg style="left:12px;top:603.3px;" width="13" height="14" viewBox="0 0 13 14"><rect x="0.5" y="0.5" width="11.5" height="12.5" rx="1" fill="#f8fbff" stroke="#8eb0dc"/><path d="M2 2.2 H10.5" stroke="#50b050" stroke-width="1.2"/><path d="M2 4.5 H10.5 M2 7 H10.5 M2 9.5 H10.5 M5 4 V11.5" stroke="#a8c4e8" stroke-width="1"/></svg>
<svg style="left:12.5px;top:631.35px;" width="13" height="14" viewBox="0 0 13 14"><ellipse cx="5.5" cy="2.2" rx="5" ry="1.8" fill="#a8dce8"/><rect x="0.5" y="2.2" width="10" height="9" fill="#3a9cb4"/><ellipse cx="5.5" cy="11.2" rx="5" ry="1.8" fill="#2a7c94"/><circle cx="9.5" cy="10" r="3" fill="#4cb84c" stroke="#e8f8e8" stroke-width="0.8"/><path d="M9.5 8.3 V11.7 M7.8 10 H11.2" stroke="#fff" stroke-width="1"/></svg>
<svg style="left:11.5px;top:658.9px;" width="13" height="14" viewBox="0 0 13 14"><rect x="0.5" y="0.5" width="12" height="13" rx="1.5" fill="#fff" stroke="#335"/><rect x="2.5" y="2.5" width="6" height="4" fill="#fff" stroke="#4a7ad0"/><rect x="4.5" y="6.5" width="6" height="5" fill="#dbe8f8" stroke="#4a7ad0"/></svg>
<div style="left:6px;top:680.95px;width:272.5px;height:28.6px;background:linear-gradient(#d4e5fa 0%,#bcd5f3 35%,#a3c2ed 65%,#82a9e1 100%);border-bottom:1.2px solid #1f4fa8;"></div>
<svg style="left:265px;top:684px;" width="9" height="16" viewBox="0 0 9 16"><path d="M1 1.5 L3.5 4 L1 6.5 M4.5 1.5 L7 4 L4.5 6.5" stroke="#111" stroke-width="1.3" fill="none"/><path d="M1.5 10 H7.5 L4.5 13.5 Z" fill="#111"/></svg>
<div style="left:4px;top:709.5px;width:276px;height:20px;background:#c7daf6;"></div>
<div style="left:7.5px;top:728px;width:242px;height:1px;background:#f4f8fe;"></div>
<div style="left:249px;top:711px;width:1px;height:18px;background:#f4f8fe;"></div>
<div style="left:7.5px;top:710px;width:61.5px;height:18.5px;background:#fff;border:1px solid #a8c0e4;border-top:none;border-radius:0 0 4px 4px;"></div>
<div style="left:70px;top:710px;width:63px;height:17.5px;background:linear-gradient(#e0eafa,#b6cdf0 50%,#93b3e4);border:1px solid #8eacdc;border-top:none;border-radius:0 0 4px 4px;"></div>
<div style="left:134.5px;top:710px;width:52.5px;height:17.5px;background:linear-gradient(#e0eafa,#b6cdf0 50%,#93b3e4);border:1px solid #8eacdc;border-top:none;border-radius:0 0 4px 4px;"></div>
<svg style="left:10.5px;top:712.5px;" width="12" height="13" viewBox="0 0 12 13"><rect x="0.5" y="0.5" width="11" height="12" fill="#f8f6e8" stroke="#6e6e5a"/><rect x="8" y="1" width="3" height="11" fill="#d8d4a0"/><path d="M2 3 H3 M4 3 H7 M2 5.5 H3 M4 5.5 H7 M2 8 H3 M4 8 H7 M2 10.5 H3 M4 10.5 H7" stroke="#333" stroke-width="1"/></svg>
<div style='left:25.7px;top:714px;font:normal 10px "Liberation Sans";line-height:10px;color:#111;white-space:pre;letter-spacing:-0.29px;'>Launcher</div>
<svg style="left:73px;top:712.5px;" width="12" height="13" viewBox="0 0 12 13"><rect x="0.5" y="0.5" width="11" height="12" fill="#f8f6e8" stroke="#6e6e5a"/><rect x="8" y="1" width="3" height="11" fill="#d8d4a0"/><path d="M2 3 H3 M4 3 H7 M2 5.5 H3 M4 5.5 H7 M2 8 H3 M4 8 H7 M2 10.5 H3 M4 10.5 H7" stroke="#333" stroke-width="1"/></svg>
<div style='left:88.5px;top:714px;font:normal 10px "Liberation Sans";line-height:10px;color:#111;white-space:pre;letter-spacing:-0.13px;'>Favorites</div>
<svg style="left:137px;top:712.5px;" width="12" height="13" viewBox="0 0 12 13"><rect x="0.5" y="0.5" width="11" height="12" fill="#f8f6e8" stroke="#6e6e5a"/><rect x="8" y="1" width="3" height="11" fill="#d8d4a0"/><path d="M2 3 H3 M4 3 H7 M2 5.5 H3 M4 5.5 H7 M2 8 H3 M4 8 H7 M2 10.5 H3 M4 10.5 H7" stroke="#333" stroke-width="1"/></svg>
<div style='left:153.2px;top:714px;font:normal 10px "Liberation Sans";line-height:10px;color:#111;white-space:pre;letter-spacing:-0.56px;'>Guides</div>
<svg style="left:258.5px;top:716px;" width="5" height="9" viewBox="0 0 5 9"><path d="M4.5 0.5 V8.5 L0.5 4.5 Z" fill="#a0a8b4"/></svg>
<svg style="left:269px;top:716px;" width="5" height="9" viewBox="0 0 5 9"><path d="M0.5 0.5 V8.5 L4.5 4.5 Z" fill="#a0a8b4"/></svg>
<div style="left:4px;top:733.5px;width:1151.5px;height:24.5px;background:#b9d0f3;border:1px solid #7f9fd2;"></div>
<svg style="left:9.5px;top:740px;" width="12" height="13" viewBox="0 0 12 13"><rect x="0.5" y="0.5" width="11" height="12" fill="#f8f6e8" stroke="#6e6e5a"/><rect x="8" y="1" width="3" height="11" fill="#d8d4a0"/><path d="M2 3 H3 M4 3 H7 M2 5.5 H3 M4 5.5 H7 M2 8 H3 M4 8 H7 M2 10.5 H3 M4 10.5 H7" stroke="#333" stroke-width="1"/></svg>
<div style='left:25px;top:742px;font:normal 10px "Liberation Sans";line-height:10px;color:#111;white-space:pre;letter-spacing:-0.19px;'>Output Messages</div>
<div style="left:0px;top:758px;width:1156px;height:2px;background:linear-gradient(#b4b4b4,#d0d0d0);"></div>
<div style="left:283.5px;top:84px;width:871px;height:645.5px;background:#fff;border:1px solid #7f9cc8;"></div>
<svg style="left:282px;top:66px;" width="156" height="20" viewBox="0 0 156 20"><path d="M1.6 18.5 L20 1.4 H150 Q153.3 1.4 153.3 4.5 V18.5" fill="#fff" stroke="#7f9cc8" stroke-width="1"/><rect x="2.5" y="17.6" width="150.3" height="2.5" fill="#fff"/></svg>
<svg style="left:302.5px;top:69px;" width="15" height="13" viewBox="0 0 15 13"><rect x="0.5" y="0.5" width="13" height="11" rx="1.5" fill="#eef3f9" stroke="#6a96d8"/><rect x="1" y="1" width="12" height="2" fill="#8ab4ea"/><rect x="2" y="5" width="3" height="1.2" fill="#4a7ed0"/><rect x="2" y="8" width="3" height="1.2" fill="#4a7ed0"/><circle cx="9.5" cy="8" r="2.6" fill="#cfe2f7" stroke="#9ac0ea" stroke-width="0.8"/><circle cx="13" cy="11.8" r="1.2" fill="#e0a060"/></svg>
<div style='left:320px;top:71px;font:normal 10px "Liberation Sans";line-height:10px;color:#111;white-space:pre;letter-spacing:-0.21px;'>Station Group Admin.</div>
<svg style="left:419.5px;top:73px;" width="9" height="8" viewBox="0 0 9 8"><path d="M1 1 L8 7 M8 1 L1 7" stroke="#111" stroke-width="1.6"/></svg>
<svg style="left:1128px;top:72px;" width="7.5" height="4.5" viewBox="0 0 7.5 4.5"><path d="M0 0 H7.5 L3.75 4.5 Z" fill="#111"/></svg>
<svg style="left:1143.5px;top:70px;" width="9" height="9" viewBox="0 0 9 9"><path d="M1 1 L8 8 M8 1 L1 8" stroke="#111" stroke-width="1.5"/></svg>
<div style='left:311.8px;top:91px;font:normal 10px "Liberation Sans";line-height:10px;color:#111;white-space:pre;letter-spacing:-0.2px;'>Query date:</div>
<div style="left:364px;top:87.4px;width:76.5px;height:15.8px;border:1px solid #cdd1d8;border-top-color:#b9bdc4;border-radius:2px;background:#fff;"></div>
<div style='left:369.7px;top:91px;font:normal 10px "Liberation Sans";line-height:10px;color:#111;white-space:pre;letter-spacing:-0.27px;'>07/31/2017</div>
<div style="left:424px;top:89px;width:15px;height:12.8px;border:1px solid #777;background:linear-gradient(#fafafa 0%,#efefef 45%,#dcdcdc 55%,#e4e4e4 100%);box-shadow:inset 0 0 0 1px #fff;"></div>
<svg style="left:427.9px;top:94.9px;" width="7.2" height="4.5" viewBox="0 0 7.2 4.5"><path d="M0 0 H7.2 L3.6 4.5 Z" fill="#000"/></svg>
<div style="left:365px;top:106px;width:72px;height:1.2px;background:#c4c4c4;"></div>
<div style='left:306.2px;top:114px;font:normal 10px "Liberation Sans";line-height:10px;color:#111;white-space:pre;letter-spacing:-0.38px;'>Group Name</div>
<div style="left:364.8px;top:111.6px;width:251px;height:15px;border:1px solid #a8aaae;background:#fff;"></div>
<div style='left:309.5px;top:133px;font:normal 10px "Liberation Sans";line-height:10px;color:#111;white-space:pre;letter-spacing:-0.19px;'>Group Type</div>
<div style="left:364.8px;top:131.5px;width:167px;height:15px;border:1px solid #a8aaae;background:#fff;"></div>
<div style="left:514.3px;top:132px;width:17.5px;height:14.5px;border:1px solid #777;background:linear-gradient(#fafafa 0%,#efefef 45%,#dcdcdc 55%,#e4e4e4 100%);box-shadow:inset 0 0 0 1px #fff;"></div>
<svg style="left:519.45px;top:138.75px;" width="7.2" height="4.5" viewBox="0 0 7.2 4.5"><path d="M0 0 H7.2 L3.6 4.5 Z" fill="#000"/></svg>
<div style='left:310.3px;top:153px;font:normal 10px "Liberation Sans";line-height:10px;color:#111;white-space:pre;letter-spacing:-0.23px;'>Group Note</div>
<div style="left:364.8px;top:150.5px;width:309px;height:43.5px;border:1px solid #a8aaae;background:#fff;"></div>
<div style="left:285px;top:211px;width:867.5px;height:1.2px;background:#a8a8a8;"></div>
<div style="left:356.5px;top:212.5px;width:1px;height:14px;background:#ececec;"></div>
<div style="left:502.3px;top:212.5px;width:1px;height:14px;background:#ececec;"></div>
<div style="left:638.5px;top:212.5px;width:1px;height:14px;background:#ececec;"></div>
<div style="left:285px;top:226.5px;width:421px;height:476.5px;background:#f0f0f0;border-right:1.3px solid #6a6a6a;border-bottom:1.3px solid #6a6a6a;"></div>
<div style="left:291.5px;top:234px;width:392.5px;height:16px;background:#fff;"></div>
<div style="left:293px;top:246.8px;width:63.5px;height:2.2px;background:#6a6a6a;"></div>
<div style="left:358.5px;top:246.8px;width:144px;height:2.2px;background:#6a6a6a;"></div>
<div style="left:504.5px;top:246.8px;width:133.5px;height:2.2px;background:#6a6a6a;"></div>
<div style="left:640px;top:246.8px;width:43.5px;height:2.2px;background:#6a6a6a;"></div>
<div style='left:307.7px;top:237px;font:normal 10px "Liberation Sans";line-height:10px;color:#111;white-space:pre;letter-spacing:-0.11px;'>Group #</div>
<div style='left:404.6px;top:237px;font:normal 10px "Liberation Sans";line-height:10px;color:#111;white-space:pre;letter-spacing:-0.38px;'>Group Name</div>
<div style='left:546.6px;top:237px;font:normal 10px "Liberation Sans";line-height:10px;color:#111;white-space:pre;letter-spacing:-0.19px;'>Group Type</div>
<div style="left:291.5px;top:249.5px;width:392.5px;height:428.5px;overflow:hidden;background:#fff;">
<div style="left:0px;top:0px;width:65.3px;height:14.29px;background:#3399ff;"></div>
<div style="left:66.3px;top:0px;width:145.5px;height:14.29px;background:#3399ff;"></div>
<div style="left:212.8px;top:0px;width:134.3px;height:14.29px;background:#3399ff;"></div>
<div style="left:348.1px;top:0px;width:44.4px;height:14.29px;background:#3399ff;"></div>
<div style="left:0px;top:14.29px;width:392.5px;height:14.29px;background:#ffffff;border-top:1px solid #ececec;"></div>
<div style="left:0px;top:28.58px;width:392.5px;height:14.29px;background:#f7f7f7;border-top:1px solid #ececec;"></div>
<div style="left:0px;top:42.87px;width:392.5px;height:14.29px;background:#ffffff;border-top:1px solid #ececec;"></div>
<div style="left:0px;top:57.16px;width:392.5px;height:14.29px;background:#f7f7f7;border-top:1px solid #ececec;"></div>
<div style="left:0px;top:71.45px;width:392.5px;height:14.29px;background:#ffffff;border-top:1px solid #ececec;"></div>
<div style="left:0px;top:85.74px;width:392.5px;height:14.29px;background:#f7f7f7;border-top:1px solid #ececec;"></div>
<div style="left:0px;top:100.03px;width:392.5px;height:14.29px;background:#ffffff;border-top:1px solid #ececec;"></div>
<div style="left:0px;top:114.32px;width:392.5px;height:14.29px;background:#f7f7f7;border-top:1px solid #ececec;"></div>
<div style="left:0px;top:128.61px;width:392.5px;height:14.29px;background:#ffffff;border-top:1px solid #ececec;"></div>
<div style="left:0px;top:142.9px;width:392.5px;height:14.29px;background:#f7f7f7;border-top:1px solid #ececec;"></div>
<div style="left:0px;top:157.19px;width:392.5px;height:14.29px;background:#ffffff;border-top:1px solid #ececec;"></div>
<div style="left:0px;top:171.48px;width:392.5px;height:14.29px;background:#f7f7f7;border-top:1px solid #ececec;"></div>
<div style="left:0px;top:185.77px;width:392.5px;height:14.29px;background:#ffffff;border-top:1px solid #ececec;"></div>
<div style="left:0px;top:200.06px;width:392.5px;height:14.29px;background:#f7f7f7;border-top:1px solid #ececec;"></div>
<div style="left:0px;top:214.35px;width:392.5px;height:14.29px;background:#ffffff;border-top:1px solid #ececec;"></div>
<div style="left:0px;top:228.64px;width:392.5px;height:14.29px;background:#f7f7f7;border-top:1px solid #ececec;"></div>
<div style="left:0px;top:242.93px;width:392.5px;height:14.29px;background:#ffffff;border-top:1px solid #ececec;"></div>
<div style="left:0px;top:257.22px;width:392.5px;height:14.29px;background:#f7f7f7;border-top:1px solid #ececec;"></div>
<div style="left:0px;top:271.51px;width:392.5px;height:14.29px;background:#ffffff;border-top:1px solid #ececec;"></div>
<div style="left:0px;top:285.8px;width:392.5px;height:14.29px;background:#f7f7f7;border-top:1px solid #ececec;"></div>
<div style="left:0px;top:300.09px;width:392.5px;height:14.29px;background:#ffffff;border-top:1px solid #ececec;"></div>
<div style="left:0px;top:314.38px;width:392.5px;height:14.29px;background:#f7f7f7;border-top:1px solid #ececec;"></div>
<div style="left:0px;top:328.67px;width:392.5px;height:14.29px;background:#ffffff;border-top:1px solid #ececec;"></div>
<div style="left:0px;top:342.96px;width:392.5px;height:14.29px;background:#f7f7f7;border-top:1px solid #ececec;"></div>
<div style="left:0px;top:357.25px;width:392.5px;height:14.29px;background:#ffffff;border-top:1px solid #ececec;"></div>
<div style="left:0px;top:371.54px;width:392.5px;height:14.29px;background:#f7f7f7;border-top:1px solid #ececec;"></div>
<div style="left:0px;top:385.83px;width:392.5px;height:14.29px;background:#ffffff;border-top:1px solid #ececec;"></div>
<div style="left:0px;top:400.12px;width:392.5px;height:14.29px;background:#f7f7f7;border-top:1px solid #ececec;"></div>
<div style="left:0px;top:414.41px;width:392.5px;height:14.29px;background:#ffffff;border-top:1px solid #ececec;"></div>
<div style="left:65.3px;top:14.29px;width:1px;height:428px;background:#ececec;"></div>
<div style="left:211.8px;top:14.29px;width:1px;height:428px;background:#ececec;"></div>
<div style="left:347.1px;top:14.29px;width:1px;height:428px;background:#ececec;"></div>
</div>
<div style="left:504.3px;top:251px;width:134.3px;height:14px;overflow:hidden;">
<div style='left:1.1px;top:2px;font:normal 10.8px "Liberation Sans";line-height:10.8px;color:#fff;white-space:pre;transform:scaleX(0.8550);transform-origin:0 0;'>CENTRAL DELIVERY POINT</div>
</div>
<div style="left:291.5px;top:265px;width:65.3px;height:14px;overflow:hidden;">
<div style='left:1.9px;top:2px;font:normal 10.8px "Liberation Sans";line-height:10.8px;color:#111;white-space:pre;transform:scaleX(0.8700);transform-origin:0 0;'>0</div>
</div>
<div style="left:357.8px;top:265px;width:145.5px;height:14px;overflow:hidden;">
<div style='left:1.5px;top:2px;font:normal 10.8px "Liberation Sans";line-height:10.8px;color:#111;white-space:pre;transform:scaleX(0.8700);transform-origin:0 0;'>0</div>
</div>
<div style="left:504.3px;top:265px;width:134.3px;height:14px;overflow:hidden;">
<div style='left:1.1px;top:2px;font:normal 10.8px "Liberation Sans";line-height:10.8px;color:#111;white-space:pre;transform:scaleX(0.8550);transform-origin:0 0;'>CENTRAL DELIVERY POINT</div>
</div>
<div style="left:291.5px;top:279px;width:65.3px;height:14px;overflow:hidden;">
<div style='left:1.9px;top:2px;font:normal 10.8px "Liberation Sans";line-height:10.8px;color:#111;white-space:pre;transform:scaleX(0.8700);transform-origin:0 0;'>2TierNGLs</div>
</div>
<div style="left:357.8px;top:279px;width:145.5px;height:14px;overflow:hidden;">
<div style='left:1.5px;top:2px;font:normal 10.8px "Liberation Sans";line-height:10.8px;color:#111;white-space:pre;transform:scaleX(0.8760);transform-origin:0 0;'>NGL Stations on 2Tier Plt</div>
</div>
<div style="left:504.3px;top:279px;width:134.3px;height:14px;overflow:hidden;">
<div style='left:1.1px;top:2px;font:normal 10.8px "Liberation Sans";line-height:10.8px;color:#111;white-space:pre;transform:scaleX(0.8550);transform-origin:0 0;'>PROC PLANT GROUP</div>
</div>
<div style="left:291.5px;top:294px;width:65.3px;height:14px;overflow:hidden;">
<div style='left:1.9px;top:2px;font:normal 10.8px "Liberation Sans";line-height:10.8px;color:#111;white-space:pre;transform:scaleX(0.8730);transform-origin:0 0;'>Brenham NGL</div>
</div>
<div style="left:357.8px;top:294px;width:145.5px;height:14px;overflow:hidden;">
<div style='left:1.5px;top:2px;font:normal 10.8px "Liberation Sans";line-height:10.8px;color:#111;white-space:pre;transform:scaleX(0.8762);transform-origin:0 0;'>Brenham NGL Receipt</div>
</div>
<div style="left:504.3px;top:294px;width:134.3px;height:14px;overflow:hidden;">
<div style='left:1.1px;top:2px;font:normal 10.8px "Liberation Sans";line-height:10.8px;color:#111;white-space:pre;transform:scaleX(0.8550);transform-origin:0 0;'>CENTRAL DELIVERY POINT</div>
</div>
<div style="left:639.6px;top:294px;width:44.4px;height:14px;overflow:hidden;">
<div style='left:1.1px;top:2px;font:normal 10.8px "Liberation Sans";line-height:10.8px;color:#111;white-space:pre;transform:scaleX(0.8730);transform-origin:0 0;'>NGL Receipt</div>
</div>
<div style="left:291.5px;top:308px;width:65.3px;height:14px;overflow:hidden;">
<div style='left:1.9px;top:2px;font:normal 10.8px "Liberation Sans";line-height:10.8px;color:#111;white-space:pre;transform:scaleX(0.8550);transform-origin:0 0;'>CAC</div>
</div>
<div style="left:357.8px;top:308px;width:145.5px;height:14px;overflow:hidden;">
<div style='left:1.5px;top:2px;font:normal 10.8px "Liberation Sans";line-height:10.8px;color:#111;white-space:pre;transform:scaleX(0.8738);transform-origin:0 0;'>CAC -All My Stations</div>
</div>
<div style="left:504.3px;top:308px;width:134.3px;height:14px;overflow:hidden;">
<div style='left:1.1px;top:2px;font:normal 10.8px "Liberation Sans";line-height:10.8px;color:#111;white-space:pre;transform:scaleX(0.8805);transform-origin:0 0;'>Marketing Region Group</div>
</div>
<div style="left:291.5px;top:322px;width:65.3px;height:14px;overflow:hidden;">
<div style='left:1.9px;top:2px;font:normal 10.8px "Liberation Sans";line-height:10.8px;color:#111;white-space:pre;transform:scaleX(0.8800);transform-origin:0 0;'>Castex</div>
</div>
<div style="left:357.8px;top:322px;width:145.5px;height:14px;overflow:hidden;">
<div style='left:1.5px;top:2px;font:normal 10.8px "Liberation Sans";line-height:10.8px;color:#111;white-space:pre;transform:scaleX(0.8800);transform-origin:0 0;'>Castex/Campbell Soup</div>
</div>
<div style="left:504.3px;top:322px;width:134.3px;height:14px;overflow:hidden;">
<div style='left:1.1px;top:2px;font:normal 10.8px "Liberation Sans";line-height:10.8px;color:#111;white-space:pre;transform:scaleX(0.8550);transform-origin:0 0;'>CENTRAL DELIVERY POINT</div>
</div>
<div style="left:639.6px;top:322px;width:44.4px;height:14px;overflow:hidden;">
<div style='left:1.1px;top:2px;font:normal 10.8px "Liberation Sans";line-height:10.8px;color:#111;white-space:pre;transform:scaleX(0.8775);transform-origin:0 0;'>Castex Pr</div>
</div>
<div style="left:291.5px;top:336px;width:65.3px;height:14px;overflow:hidden;">
<div style='left:1.9px;top:2px;font:normal 10.8px "Liberation Sans";line-height:10.8px;color:#111;white-space:pre;transform:scaleX(0.8717);transform-origin:0 0;'>CAW Solarc</div>
</div>
<div style="left:357.8px;top:336px;width:145.5px;height:14px;overflow:hidden;">
<div style='left:1.5px;top:2px;font:normal 10.8px "Liberation Sans";line-height:10.8px;color:#111;white-space:pre;transform:scaleX(0.8550);transform-origin:0 0;'>CAW SOLARC</div>
</div>
<div style="left:504.3px;top:336px;width:134.3px;height:14px;overflow:hidden;">
<div style='left:1.1px;top:2px;font:normal 10.8px "Liberation Sans";line-height:10.8px;color:#111;white-space:pre;transform:scaleX(0.8779);transform-origin:0 0;'>Non-Pathed Nom Group</div>
</div>
<div style="left:291.5px;top:351px;width:65.3px;height:14px;overflow:hidden;">
<div style='left:1.9px;top:2px;font:normal 10.8px "Liberation Sans";line-height:10.8px;color:#111;white-space:pre;transform:scaleX(0.8717);transform-origin:0 0;'>CAW2 Solarc</div>
</div>
<div style="left:357.8px;top:351px;width:145.5px;height:14px;overflow:hidden;">
<div style='left:1.5px;top:2px;font:normal 10.8px "Liberation Sans";line-height:10.8px;color:#111;white-space:pre;transform:scaleX(0.8550);transform-origin:0 0;'>CAW2 SOLARC</div>
</div>
<div style="left:504.3px;top:351px;width:134.3px;height:14px;overflow:hidden;">
<div style='left:1.1px;top:2px;font:normal 10.8px "Liberation Sans";line-height:10.8px;color:#111;white-space:pre;transform:scaleX(0.8779);transform-origin:0 0;'>Non-Pathed Nom Group</div>
</div>
<div style="left:291.5px;top:365px;width:65.3px;height:14px;overflow:hidden;">
<div style='left:1.9px;top:2px;font:normal 10.8px "Liberation Sans";line-height:10.8px;color:#111;white-space:pre;transform:scaleX(0.8550);transform-origin:0 0;'>CCNG-TRANSMISSION</div>
</div>
<div style="left:357.8px;top:365px;width:145.5px;height:14px;overflow:hidden;">
<div style='left:1.5px;top:2px;font:normal 10.8px "Liberation Sans";line-height:10.8px;color:#111;white-space:pre;transform:scaleX(0.8550);transform-origin:0 0;'>CCNG - TRANSMISSION</div>
</div>
<div style="left:504.3px;top:365px;width:134.3px;height:14px;overflow:hidden;">
<div style='left:1.1px;top:2px;font:normal 10.8px "Liberation Sans";line-height:10.8px;color:#111;white-space:pre;transform:scaleX(0.8805);transform-origin:0 0;'>Marketing Region Group</div>
</div>
<div style="left:291.5px;top:379px;width:65.3px;height:14px;overflow:hidden;">
<div style='left:1.9px;top:2px;font:normal 10.8px "Liberation Sans";line-height:10.8px;color:#111;white-space:pre;transform:scaleX(0.8550);transform-origin:0 0;'>CRH</div>
</div>
<div style="left:357.8px;top:379px;width:145.5px;height:14px;overflow:hidden;">
<div style='left:1.5px;top:2px;font:normal 10.8px "Liberation Sans";line-height:10.8px;color:#111;white-space:pre;transform:scaleX(0.8738);transform-origin:0 0;'>CRH - All My Stations</div>
</div>
<div style="left:504.3px;top:379px;width:134.3px;height:14px;overflow:hidden;">
<div style='left:1.1px;top:2px;font:normal 10.8px "Liberation Sans";line-height:10.8px;color:#111;white-space:pre;transform:scaleX(0.8805);transform-origin:0 0;'>Marketing Region Group</div>
</div>
<div style="left:291.5px;top:394px;width:65.3px;height:14px;overflow:hidden;">
<div style='left:1.9px;top:2px;font:normal 10.8px "Liberation Sans";line-height:10.8px;color:#111;white-space:pre;transform:scaleX(0.8550);transform-origin:0 0;'>D-25</div>
</div>
<div style="left:357.8px;top:394px;width:145.5px;height:14px;overflow:hidden;">
<div style='left:1.5px;top:2px;font:normal 10.8px "Liberation Sans";line-height:10.8px;color:#111;white-space:pre;transform:scaleX(0.8700);transform-origin:0 0;'>MD Desk</div>
</div>
<div style="left:504.3px;top:394px;width:134.3px;height:14px;overflow:hidden;">
<div style='left:1.1px;top:2px;font:normal 10.8px "Liberation Sans";line-height:10.8px;color:#111;white-space:pre;transform:scaleX(0.8794);transform-origin:0 0;'>General Desk Group</div>
</div>
<div style="left:639.6px;top:394px;width:44.4px;height:14px;overflow:hidden;">
<div style='left:1.1px;top:2px;font:normal 10.8px "Liberation Sans";line-height:10.8px;color:#111;white-space:pre;transform:scaleX(0.8795);transform-origin:0 0;'>Trading Desk</div>
</div>
<div style="left:291.5px;top:408px;width:65.3px;height:14px;overflow:hidden;">
<div style='left:1.9px;top:2px;font:normal 10.8px "Liberation Sans";line-height:10.8px;color:#111;white-space:pre;transform:scaleX(0.8730);transform-origin:0 0;'>DC Comic Rcp</div>
</div>
<div style="left:357.8px;top:408px;width:145.5px;height:14px;overflow:hidden;">
<div style='left:1.5px;top:2px;font:normal 10.8px "Liberation Sans";line-height:10.8px;color:#111;white-space:pre;transform:scaleX(0.8770);transform-origin:0 0;'>DC Comic Receipts</div>
</div>
<div style="left:504.3px;top:408px;width:134.3px;height:14px;overflow:hidden;">
<div style='left:1.1px;top:2px;font:normal 10.8px "Liberation Sans";line-height:10.8px;color:#111;white-space:pre;transform:scaleX(0.8550);transform-origin:0 0;'>CENTRAL DELIVERY POINT</div>
</div>
<div style="left:291.5px;top:422px;width:65.3px;height:14px;overflow:hidden;">
<div style='left:1.9px;top:2px;font:normal 10.8px "Liberation Sans";line-height:10.8px;color:#111;white-space:pre;transform:scaleX(0.8550);transform-origin:0 0;'>DC COMICS</div>
</div>
<div style="left:357.8px;top:422px;width:145.5px;height:14px;overflow:hidden;">
<div style='left:1.5px;top:2px;font:normal 10.8px "Liberation Sans";line-height:10.8px;color:#111;white-space:pre;transform:scaleX(0.8550);transform-origin:0 0;'>DC COMICS FUEL</div>
</div>
<div style="left:504.3px;top:422px;width:134.3px;height:14px;overflow:hidden;">
<div style='left:1.1px;top:2px;font:normal 10.8px "Liberation Sans";line-height:10.8px;color:#111;white-space:pre;transform:scaleX(0.8550);transform-origin:0 0;'>COMPRESSOR GROUP</div>
</div>
<div style="left:291.5px;top:436px;width:65.3px;height:14px;overflow:hidden;">
<div style='left:1.9px;top:2px;font:normal 10.8px "Liberation Sans";line-height:10.8px;color:#111;white-space:pre;transform:scaleX(0.8700);transform-origin:0 0;'>Devon NGL</div>
</div>
<div style="left:357.8px;top:436px;width:145.5px;height:14px;overflow:hidden;">
<div style='left:1.5px;top:2px;font:normal 10.8px "Liberation Sans";line-height:10.8px;color:#111;white-space:pre;transform:scaleX(0.8735);transform-origin:0 0;'>Devon NGL Group</div>
</div>
<div style="left:504.3px;top:436px;width:134.3px;height:14px;overflow:hidden;">
<div style='left:1.1px;top:2px;font:normal 10.8px "Liberation Sans";line-height:10.8px;color:#111;white-space:pre;transform:scaleX(0.8550);transform-origin:0 0;'>CENTRAL DELIVERY POINT</div>
</div>
<div style="left:639.6px;top:436px;width:44.4px;height:14px;overflow:hidden;">
<div style='left:1.1px;top:2px;font:normal 10.8px "Liberation Sans";line-height:10.8px;color:#111;white-space:pre;transform:scaleX(0.8741);transform-origin:0 0;'>NGL Stations</div>
</div>
<div style="left:291.5px;top:451px;width:65.3px;height:14px;overflow:hidden;">
<div style='left:1.9px;top:2px;font:normal 10.8px "Liberation Sans";line-height:10.8px;color:#111;white-space:pre;transform:scaleX(0.8800);transform-origin:0 0;'>Dorris</div>
</div>
<div style="left:357.8px;top:451px;width:145.5px;height:14px;overflow:hidden;">
<div style='left:1.5px;top:2px;font:normal 10.8px "Liberation Sans";line-height:10.8px;color:#111;white-space:pre;transform:scaleX(0.8805);transform-origin:0 0;'>Dorris Gathering Group</div>
</div>
<div style="left:504.3px;top:451px;width:134.3px;height:14px;overflow:hidden;">
<div style='left:1.1px;top:2px;font:normal 10.8px "Liberation Sans";line-height:10.8px;color:#111;white-space:pre;transform:scaleX(0.8550);transform-origin:0 0;'>CENTRAL DELIVERY POINT</div>
</div>
<div style="left:291.5px;top:465px;width:65.3px;height:14px;overflow:hidden;">
<div style='left:1.9px;top:2px;font:normal 10.8px "Liberation Sans";line-height:10.8px;color:#111;white-space:pre;transform:scaleX(0.8730);transform-origin:0 0;'>Dorris NGLs</div>
</div>
<div style="left:357.8px;top:465px;width:145.5px;height:14px;overflow:hidden;">
<div style='left:1.5px;top:2px;font:normal 10.8px "Liberation Sans";line-height:10.8px;color:#111;white-space:pre;transform:scaleX(0.8750);transform-origin:0 0;'>Dorris Plant NGLs</div>
</div>
<div style="left:504.3px;top:465px;width:134.3px;height:14px;overflow:hidden;">
<div style='left:1.1px;top:2px;font:normal 10.8px "Liberation Sans";line-height:10.8px;color:#111;white-space:pre;transform:scaleX(0.8550);transform-origin:0 0;'>PROC PLANT GROUP</div>
</div>
<div style="left:291.5px;top:479px;width:65.3px;height:14px;overflow:hidden;">
<div style='left:1.9px;top:2px;font:normal 10.8px "Liberation Sans";line-height:10.8px;color:#111;white-space:pre;transform:scaleX(0.8790);transform-origin:0 0;'>Dorris-Mktg</div>
</div>
<div style="left:357.8px;top:479px;width:145.5px;height:14px;overflow:hidden;">
<div style='left:1.5px;top:2px;font:normal 10.8px "Liberation Sans";line-height:10.8px;color:#111;white-space:pre;transform:scaleX(0.8790);transform-origin:0 0;'>Dorris Mktg Group</div>
</div>
<div style="left:504.3px;top:479px;width:134.3px;height:14px;overflow:hidden;">
<div style='left:1.1px;top:2px;font:normal 10.8px "Liberation Sans";line-height:10.8px;color:#111;white-space:pre;transform:scaleX(0.8805);transform-origin:0 0;'>Marketing Region Group</div>
</div>
<div style="left:291.5px;top:494px;width:65.3px;height:14px;overflow:hidden;">
<div style='left:1.9px;top:2px;font:normal 10.8px "Liberation Sans";line-height:10.8px;color:#111;white-space:pre;transform:scaleX(0.8550);transform-origin:0 0;'>GLENDALE</div>
</div>
<div style="left:357.8px;top:494px;width:145.5px;height:14px;overflow:hidden;">
<div style='left:1.5px;top:2px;font:normal 10.8px "Liberation Sans";line-height:10.8px;color:#111;white-space:pre;transform:scaleX(0.8550);transform-origin:0 0;'>ARKOMA GLENDALE</div>
</div>
<div style="left:504.3px;top:494px;width:134.3px;height:14px;overflow:hidden;">
<div style='left:1.1px;top:2px;font:normal 10.8px "Liberation Sans";line-height:10.8px;color:#111;white-space:pre;transform:scaleX(0.8805);transform-origin:0 0;'>Marketing Region Group</div>
</div>
<div style="left:291.5px;top:508px;width:65.3px;height:14px;overflow:hidden;">
<div style='left:1.9px;top:2px;font:normal 10.8px "Liberation Sans";line-height:10.8px;color:#111;white-space:pre;transform:scaleX(0.8550);transform-origin:0 0;'>GLENDALE-TRANS</div>
</div>
<div style="left:357.8px;top:508px;width:145.5px;height:14px;overflow:hidden;">
<div style='left:1.5px;top:2px;font:normal 10.8px "Liberation Sans";line-height:10.8px;color:#111;white-space:pre;transform:scaleX(0.8550);transform-origin:0 0;'>GLENDALE TRANSPORT</div>
</div>
<div style="left:504.3px;top:508px;width:134.3px;height:14px;overflow:hidden;">
<div style='left:1.1px;top:2px;font:normal 10.8px "Liberation Sans";line-height:10.8px;color:#111;white-space:pre;transform:scaleX(0.8805);transform-origin:0 0;'>Marketing Region Group</div>
</div>
<div style="left:291.5px;top:522px;width:65.3px;height:14px;overflow:hidden;">
<div style='left:1.9px;top:2px;font:normal 10.8px "Liberation Sans";line-height:10.8px;color:#111;white-space:pre;transform:scaleX(0.8550);transform-origin:0 0;'>GULF COAST W</div>
</div>
<div style="left:357.8px;top:522px;width:145.5px;height:14px;overflow:hidden;">
<div style='left:1.5px;top:2px;font:normal 10.8px "Liberation Sans";line-height:10.8px;color:#111;white-space:pre;transform:scaleX(0.8550);transform-origin:0 0;'>GULF COAST - WEST</div>
</div>
<div style="left:504.3px;top:522px;width:134.3px;height:14px;overflow:hidden;">
<div style='left:1.1px;top:2px;font:normal 10.8px "Liberation Sans";line-height:10.8px;color:#111;white-space:pre;transform:scaleX(0.8805);transform-origin:0 0;'>Marketing Region Group</div>
</div>
<div style="left:639.6px;top:522px;width:44.4px;height:14px;overflow:hidden;">
<div style='left:1.1px;top:2px;font:normal 10.8px "Liberation Sans";line-height:10.8px;color:#111;white-space:pre;transform:scaleX(0.8783);transform-origin:0 0;'>Crosstex W</div>
</div>
<div style="left:291.5px;top:537px;width:65.3px;height:14px;overflow:hidden;">
<div style='left:1.9px;top:2px;font:normal 10.8px "Liberation Sans";line-height:10.8px;color:#111;white-space:pre;transform:scaleX(0.8741);transform-origin:0 0;'>Gulf CoastAL</div>
</div>
<div style="left:357.8px;top:537px;width:145.5px;height:14px;overflow:hidden;">
<div style='left:1.5px;top:2px;font:normal 10.8px "Liberation Sans";line-height:10.8px;color:#111;white-space:pre;transform:scaleX(0.8550);transform-origin:0 0;'>GULF COAST - ALABAMA</div>
</div>
<div style="left:504.3px;top:537px;width:134.3px;height:14px;overflow:hidden;">
<div style='left:1.1px;top:2px;font:normal 10.8px "Liberation Sans";line-height:10.8px;color:#111;white-space:pre;transform:scaleX(0.8805);transform-origin:0 0;'>Marketing Region Group</div>
</div>
<div style="left:639.6px;top:537px;width:44.4px;height:14px;overflow:hidden;">
<div style='left:1.1px;top:2px;font:normal 10.8px "Liberation Sans";line-height:10.8px;color:#111;white-space:pre;transform:scaleX(0.8783);transform-origin:0 0;'>Crosstex A</div>
</div>
<div style="left:291.5px;top:551px;width:65.3px;height:14px;overflow:hidden;">
<div style='left:1.9px;top:2px;font:normal 10.8px "Liberation Sans";line-height:10.8px;color:#111;white-space:pre;transform:scaleX(0.8550);transform-origin:0 0;'>GULF COASTLR</div>
</div>
<div style="left:357.8px;top:551px;width:145.5px;height:14px;overflow:hidden;">
<div style='left:1.5px;top:2px;font:normal 10.8px "Liberation Sans";line-height:10.8px;color:#111;white-space:pre;transform:scaleX(0.8550);transform-origin:0 0;'>GULF COAST - LEAF RIVER</div>
</div>
<div style="left:504.3px;top:551px;width:134.3px;height:14px;overflow:hidden;">
<div style='left:1.1px;top:2px;font:normal 10.8px "Liberation Sans";line-height:10.8px;color:#111;white-space:pre;transform:scaleX(0.8805);transform-origin:0 0;'>Marketing Region Group</div>
</div>
<div style="left:639.6px;top:551px;width:44.4px;height:14px;overflow:hidden;">
<div style='left:1.1px;top:2px;font:normal 10.8px "Liberation Sans";line-height:10.8px;color:#111;white-space:pre;transform:scaleX(0.8783);transform-origin:0 0;'>Leaf River</div>
</div>
<div style="left:291.5px;top:565px;width:65.3px;height:14px;overflow:hidden;">
<div style='left:1.9px;top:2px;font:normal 10.8px "Liberation Sans";line-height:10.8px;color:#111;white-space:pre;transform:scaleX(0.8550);transform-origin:0 0;'>GULF COASTMS</div>
</div>
<div style="left:357.8px;top:565px;width:145.5px;height:14px;overflow:hidden;">
<div style='left:1.5px;top:2px;font:normal 10.8px "Liberation Sans";line-height:10.8px;color:#111;white-space:pre;transform:scaleX(0.8550);transform-origin:0 0;'>GULF COAST - MISSISSIPPI</div>
</div>
<div style="left:504.3px;top:565px;width:134.3px;height:14px;overflow:hidden;">
<div style='left:1.1px;top:2px;font:normal 10.8px "Liberation Sans";line-height:10.8px;color:#111;white-space:pre;transform:scaleX(0.8805);transform-origin:0 0;'>Marketing Region Group</div>
</div>
<div style="left:639.6px;top:565px;width:44.4px;height:14px;overflow:hidden;">
<div style='left:1.1px;top:2px;font:normal 10.8px "Liberation Sans";line-height:10.8px;color:#111;white-space:pre;transform:scaleX(0.8783);transform-origin:0 0;'>Crosstex M</div>
</div>
<div style="left:291.5px;top:579px;width:65.3px;height:14px;overflow:hidden;">
<div style='left:1.9px;top:2px;font:normal 10.8px "Liberation Sans";line-height:10.8px;color:#111;white-space:pre;transform:scaleX(0.8550);transform-origin:0 0;'>GULF COASTV4</div>
</div>
<div style="left:357.8px;top:579px;width:145.5px;height:14px;overflow:hidden;">
<div style='left:1.5px;top:2px;font:normal 10.8px "Liberation Sans";line-height:10.8px;color:#111;white-space:pre;transform:scaleX(0.8550);transform-origin:0 0;'>GULF COAST - V4</div>
</div>
<div style="left:504.3px;top:579px;width:134.3px;height:14px;overflow:hidden;">
<div style='left:1.1px;top:2px;font:normal 10.8px "Liberation Sans";line-height:10.8px;color:#111;white-space:pre;transform:scaleX(0.8550);transform-origin:0 0;'>CENTRAL DELIVERY POINT</div>
</div>
<div style="left:639.6px;top:579px;width:44.4px;height:14px;overflow:hidden;">
<div style='left:1.1px;top:2px;font:normal 10.8px "Liberation Sans";line-height:10.8px;color:#111;white-space:pre;transform:scaleX(0.8783);transform-origin:0 0;'>Gulf Coast</div>
</div>
<div style="left:291.5px;top:594px;width:65.3px;height:14px;overflow:hidden;">
<div style='left:1.9px;top:2px;font:normal 10.8px "Liberation Sans";line-height:10.8px;color:#111;white-space:pre;transform:scaleX(0.8550);transform-origin:0 0;'>LIGON</div>
</div>
<div style="left:357.8px;top:594px;width:145.5px;height:14px;overflow:hidden;">
<div style='left:1.5px;top:2px;font:normal 10.8px "Liberation Sans";line-height:10.8px;color:#111;white-space:pre;transform:scaleX(0.8550);transform-origin:0 0;'>ARKOMA LIGON</div>
</div>
<div style="left:504.3px;top:594px;width:134.3px;height:14px;overflow:hidden;">
<div style='left:1.1px;top:2px;font:normal 10.8px "Liberation Sans";line-height:10.8px;color:#111;white-space:pre;transform:scaleX(0.8805);transform-origin:0 0;'>Marketing Region Group</div>
</div>
<div style="left:291.5px;top:608px;width:65.3px;height:14px;overflow:hidden;">
<div style='left:1.9px;top:2px;font:normal 10.8px "Liberation Sans";line-height:10.8px;color:#111;white-space:pre;transform:scaleX(0.8550);transform-origin:0 0;'>LIGON-TRAN</div>
</div>
<div style="left:357.8px;top:608px;width:145.5px;height:14px;overflow:hidden;">
<div style='left:1.5px;top:2px;font:normal 10.8px "Liberation Sans";line-height:10.8px;color:#111;white-space:pre;transform:scaleX(0.8550);transform-origin:0 0;'>LIGON TRANSPORT</div>
</div>
<div style="left:504.3px;top:608px;width:134.3px;height:14px;overflow:hidden;">
<div style='left:1.1px;top:2px;font:normal 10.8px "Liberation Sans";line-height:10.8px;color:#111;white-space:pre;transform:scaleX(0.8805);transform-origin:0 0;'>Marketing Region Group</div>
</div>
<div style="left:291.5px;top:622px;width:65.3px;height:14px;overflow:hidden;">
<div style='left:1.9px;top:2px;font:normal 10.8px "Liberation Sans";line-height:10.8px;color:#111;white-space:pre;transform:scaleX(0.8812);transform-origin:0 0;'>Lonestar</div>
</div>
<div style="left:357.8px;top:622px;width:145.5px;height:14px;overflow:hidden;">
<div style='left:1.5px;top:2px;font:normal 10.8px "Liberation Sans";line-height:10.8px;color:#111;white-space:pre;transform:scaleX(0.8805);transform-origin:0 0;'>Lonestar Station Group</div>
</div>
<div style="left:504.3px;top:622px;width:134.3px;height:14px;overflow:hidden;">
<div style='left:1.1px;top:2px;font:normal 10.8px "Liberation Sans";line-height:10.8px;color:#111;white-space:pre;transform:scaleX(0.8550);transform-origin:0 0;'>CENTRAL DELIVERY POINT</div>
</div>
<div style="left:291.5px;top:637px;width:65.3px;height:14px;overflow:hidden;">
<div style='left:1.9px;top:2px;font:normal 10.8px "Liberation Sans";line-height:10.8px;color:#111;white-space:pre;transform:scaleX(0.8550);transform-origin:0 0;'>MARVEL FUEL</div>
</div>
<div style="left:357.8px;top:637px;width:145.5px;height:14px;overflow:hidden;">
<div style='left:1.5px;top:2px;font:normal 10.8px "Liberation Sans";line-height:10.8px;color:#111;white-space:pre;transform:scaleX(0.8550);transform-origin:0 0;'>MARVEL FUEL</div>
</div>
<div style="left:504.3px;top:637px;width:134.3px;height:14px;overflow:hidden;">
<div style='left:1.1px;top:2px;font:normal 10.8px "Liberation Sans";line-height:10.8px;color:#111;white-space:pre;transform:scaleX(0.8550);transform-origin:0 0;'>COMPRESSOR GROUP</div>
</div>
<div style="left:291.5px;top:651px;width:65.3px;height:14px;overflow:hidden;">
<div style='left:1.9px;top:2px;font:normal 10.8px "Liberation Sans";line-height:10.8px;color:#111;white-space:pre;transform:scaleX(0.8550);transform-origin:0 0;'>MJS</div>
</div>
<div style="left:357.8px;top:651px;width:145.5px;height:14px;overflow:hidden;">
<div style='left:1.5px;top:2px;font:normal 10.8px "Liberation Sans";line-height:10.8px;color:#111;white-space:pre;transform:scaleX(0.8738);transform-origin:0 0;'>MJS - All My Stations</div>
</div>
<div style="left:504.3px;top:651px;width:134.3px;height:14px;overflow:hidden;">
<div style='left:1.1px;top:2px;font:normal 10.8px "Liberation Sans";line-height:10.8px;color:#111;white-space:pre;transform:scaleX(0.8805);transform-origin:0 0;'>Marketing Region Group</div>
</div>
<div style="left:291.5px;top:665px;width:65.3px;height:14px;overflow:hidden;">
<div style='left:1.9px;top:2px;font:normal 10.8px "Liberation Sans";line-height:10.8px;color:#111;white-space:pre;transform:scaleX(0.8717);transform-origin:0 0;'>Mobley NGL</div>
</div>
<div style="left:357.8px;top:665px;width:145.5px;height:14px;overflow:hidden;">
<div style='left:1.5px;top:2px;font:normal 10.8px "Liberation Sans";line-height:10.8px;color:#111;white-space:pre;transform:scaleX(0.8717);transform-origin:0 0;'>Mobley NGL</div>
</div>
<div style="left:504.3px;top:665px;width:134.3px;height:14px;overflow:hidden;">
<div style='left:1.1px;top:2px;font:normal 10.8px "Liberation Sans";line-height:10.8px;color:#111;white-space:pre;transform:scaleX(0.8550);transform-origin:0 0;'>PROC PLANT GROUP</div>
</div>
<div style="left:684px;top:234px;width:14.7px;height:444px;background:linear-gradient(90deg,#e8e8e8,#f2f2f2);"></div>
<svg style="left:687.5px;top:240px;" width="8" height="5" viewBox="0 0 8 5"><path d="M0.5 4.5 L4 0.5 L7.5 4.5 Z" fill="#333"/></svg>
<svg style="left:687.5px;top:668.5px;" width="8" height="5" viewBox="0 0 8 5"><path d="M0.5 0.5 L4 4.5 L7.5 0.5 Z" fill="#444"/></svg>
<div style="left:686px;top:251.2px;width:11.7px;height:292.5px;border:1px solid #a4a4a4;border-radius:2px;background:linear-gradient(90deg,#f8f8f8,#dedede 55%,#c8c8c8);"></div>
<svg style="left:687px;top:394px;" width="9" height="6" viewBox="0 0 9 6"><path d="M2 0.5 H7 M2 2.5 H7 M2 4.5 H7" stroke="#777" stroke-width="0.9"/></svg>
<div style="left:291.5px;top:678px;width:392.5px;height:17.5px;background:linear-gradient(#e8e8e8,#f2f2f2);"></div>
<div style="left:291.7px;top:679.4px;width:8.6px;height:15.5px;background:#6d6d6d;"></div>
<svg style="left:305px;top:683px;" width="5" height="8" viewBox="0 0 5 8"><path d="M4.5 0.5 V7.5 L0.5 4 Z" fill="#333"/></svg>
<div style="left:317.2px;top:680.4px;width:106.5px;height:13.8px;border:1px solid #a4a4a4;border-radius:2px;background:linear-gradient(#f8f8f8,#dedede 55%,#c8c8c8);"></div>
<svg style="left:366px;top:684px;" width="8" height="7" viewBox="0 0 8 7"><path d="M1.5 0.5 V6.5 M3.5 0.5 V6.5 M5.5 0.5 V6.5" stroke="#606060" stroke-width="1"/></svg>
<svg style="left:675px;top:683px;" width="5" height="8" viewBox="0 0 5 8"><path d="M0.5 0.5 V7.5 L4.5 4 Z" fill="#333"/></svg>
<div style="left:684px;top:679.2px;width:14.8px;height:16.1px;background:#c8c8c8;"></div>
<div style='left:740.8px;top:228px;font:normal 10px "Liberation Sans";line-height:10px;color:#1c1cf0;white-space:pre;letter-spacing:-0.3px;'>Group #</div>
<div style="left:782px;top:225px;width:88.6px;height:13.5px;border:1px solid #a8aaae;background:#fff;"></div>
<div style='left:721.5px;top:247px;font:normal 10px "Liberation Sans";line-height:10px;color:#111;white-space:pre;letter-spacing:-0.39px;'>Group Name</div>
<div style="left:782px;top:244.2px;width:179.7px;height:13.2px;border:1px solid #a8aaae;background:#fff;"></div>
<div style='left:724.3px;top:264px;font:normal 10px "Liberation Sans";line-height:10px;color:#111;white-space:pre;letter-spacing:-0.15px;'>Group Type</div>
<div style="left:782px;top:262px;width:179.7px;height:13.7px;border:1px solid #a8aaae;background:#fff;"></div>
<div style='left:784px;top:264px;font:normal 10.8px "Liberation Sans";line-height:10.8px;color:#111;white-space:pre;transform:scaleX(0.8345);transform-origin:0 0;'>CENTRAL DELIVERY POINT</div>
<div style="left:944px;top:262.5px;width:17.7px;height:13px;border:1px solid #777;background:linear-gradient(#fafafa 0%,#efefef 45%,#dcdcdc 55%,#e4e4e4 100%);box-shadow:inset 0 0 0 1px #fff;"></div>
<svg style="left:949.25px;top:268.5px;" width="7.2" height="4.5" viewBox="0 0 7.2 4.5"><path d="M0 0 H7.2 L3.6 4.5 Z" fill="#000"/></svg>
<div style='left:726.2px;top:283px;font:normal 10px "Liberation Sans";line-height:10px;color:#111;white-space:pre;letter-spacing:-0.31px;'>Group Note</div>
<div style="left:782px;top:281.2px;width:356.8px;height:46.5px;border:1px solid #a8aaae;background:#fff;"></div>
<div style='left:987.7px;top:228px;font:normal 10px "Liberation Sans";line-height:10px;color:#111;white-space:pre;letter-spacing:-0.34px;'>Ref Code</div>
<div style="left:1034.6px;top:225px;width:103px;height:13.5px;border:1px solid #a8aaae;background:#fff;"></div>
<div style="left:1120.2px;top:225.3px;width:17.6px;height:13px;border:1px solid #777;background:linear-gradient(#fafafa 0%,#efefef 45%,#dcdcdc 55%,#e4e4e4 100%);box-shadow:inset 0 0 0 1px #fff;"></div>
<svg style="left:1125.4px;top:231.3px;" width="7.2" height="4.5" viewBox="0 0 7.2 4.5"><path d="M0 0 H7.2 L3.6 4.5 Z" fill="#000"/></svg>
<div style='left:989.6px;top:246px;font:normal 10px "Liberation Sans";line-height:10px;color:#111;white-space:pre;letter-spacing:-0.3px;'>Ref Date</div>
<div style="left:1034.6px;top:244px;width:103px;height:13.6px;border:1px solid #a8aaae;background:#efefef;"></div>
<div style='left:1035.6px;top:246px;font:normal 10px "Liberation Sans";line-height:10px;color:#111;white-space:pre;letter-spacing:-0.22px;'>00/00/0000</div>
<div style="left:1122px;top:244.4px;width:15.8px;height:13px;border:1px solid #777;background:linear-gradient(#fafafa 0%,#efefef 45%,#dcdcdc 55%,#e4e4e4 100%);box-shadow:inset 0 0 0 1px #fff;"></div>
<svg style="left:1126.3px;top:250.4px;" width="7.2" height="4.5" viewBox="0 0 7.2 4.5"><path d="M0 0 H7.2 L3.6 4.5 Z" fill="#000"/></svg>
<div style="left:527.6px;top:703.5px;width:625px;height:1.2px;background:#858a94;"></div>
<div style="left:284.5px;top:701.5px;width:92px;height:27.5px;background:#fff;border-top:1.3px solid #666;"></div>
<svg style="left:291px;top:710px;" width="15" height="15" viewBox="0 0 15 15"><rect x="0.5" y="0.5" width="13" height="13" rx="1" fill="#f4f2e4" stroke="#5a5a4a"/><rect x="1" y="1" width="12" height="2.2" fill="#4a7ed0"/><path d="M3 5.5 H11 M3 7.5 H11 M3 9.5 H11" stroke="#8a9ab8" stroke-width="1.2"/><text x="10.5" y="14.8" font-size="6" font-family="Liberation Sans" font-weight="bold" fill="#00c">1</text></svg>
<div style='left:308px;top:712px;font:normal 10px "Liberation Sans";line-height:10px;color:#2424ee;white-space:pre;letter-spacing:-0.21px;'>Group Results</div>
<div style="left:376.5px;top:702.5px;width:60px;height:23.5px;background:linear-gradient(#d6d6d6,#e6e6e6 40%,#ececec);border-left:1px solid #bcbcbc;border-bottom:1px solid #9a9a9a;"></div>
<div style="left:436px;top:702.5px;width:1.3px;height:23.5px;background:#555;"></div>
<div style="left:437.3px;top:702.5px;width:90.3px;height:23.5px;background:linear-gradient(#d6d6d6,#e6e6e6 40%,#ececec);border-right:1px solid #9a9a9a;border-bottom:1px solid #9a9a9a;"></div>
<div style='left:381px;top:711px;font:normal 10px "Liberation Sans";line-height:10px;color:#222282;white-space:pre;letter-spacing:-0.1px;'>Stations (0)</div>
<div style='left:442.4px;top:711px;font:normal 10px "Liberation Sans";line-height:10px;color:#222282;white-space:pre;letter-spacing:-0.14px;'>Station Volume (0)</div>
<div style="left:283.5px;top:728.5px;width:871px;height:1.2px;background:#8aa8d8;"></div>
</body></html>
